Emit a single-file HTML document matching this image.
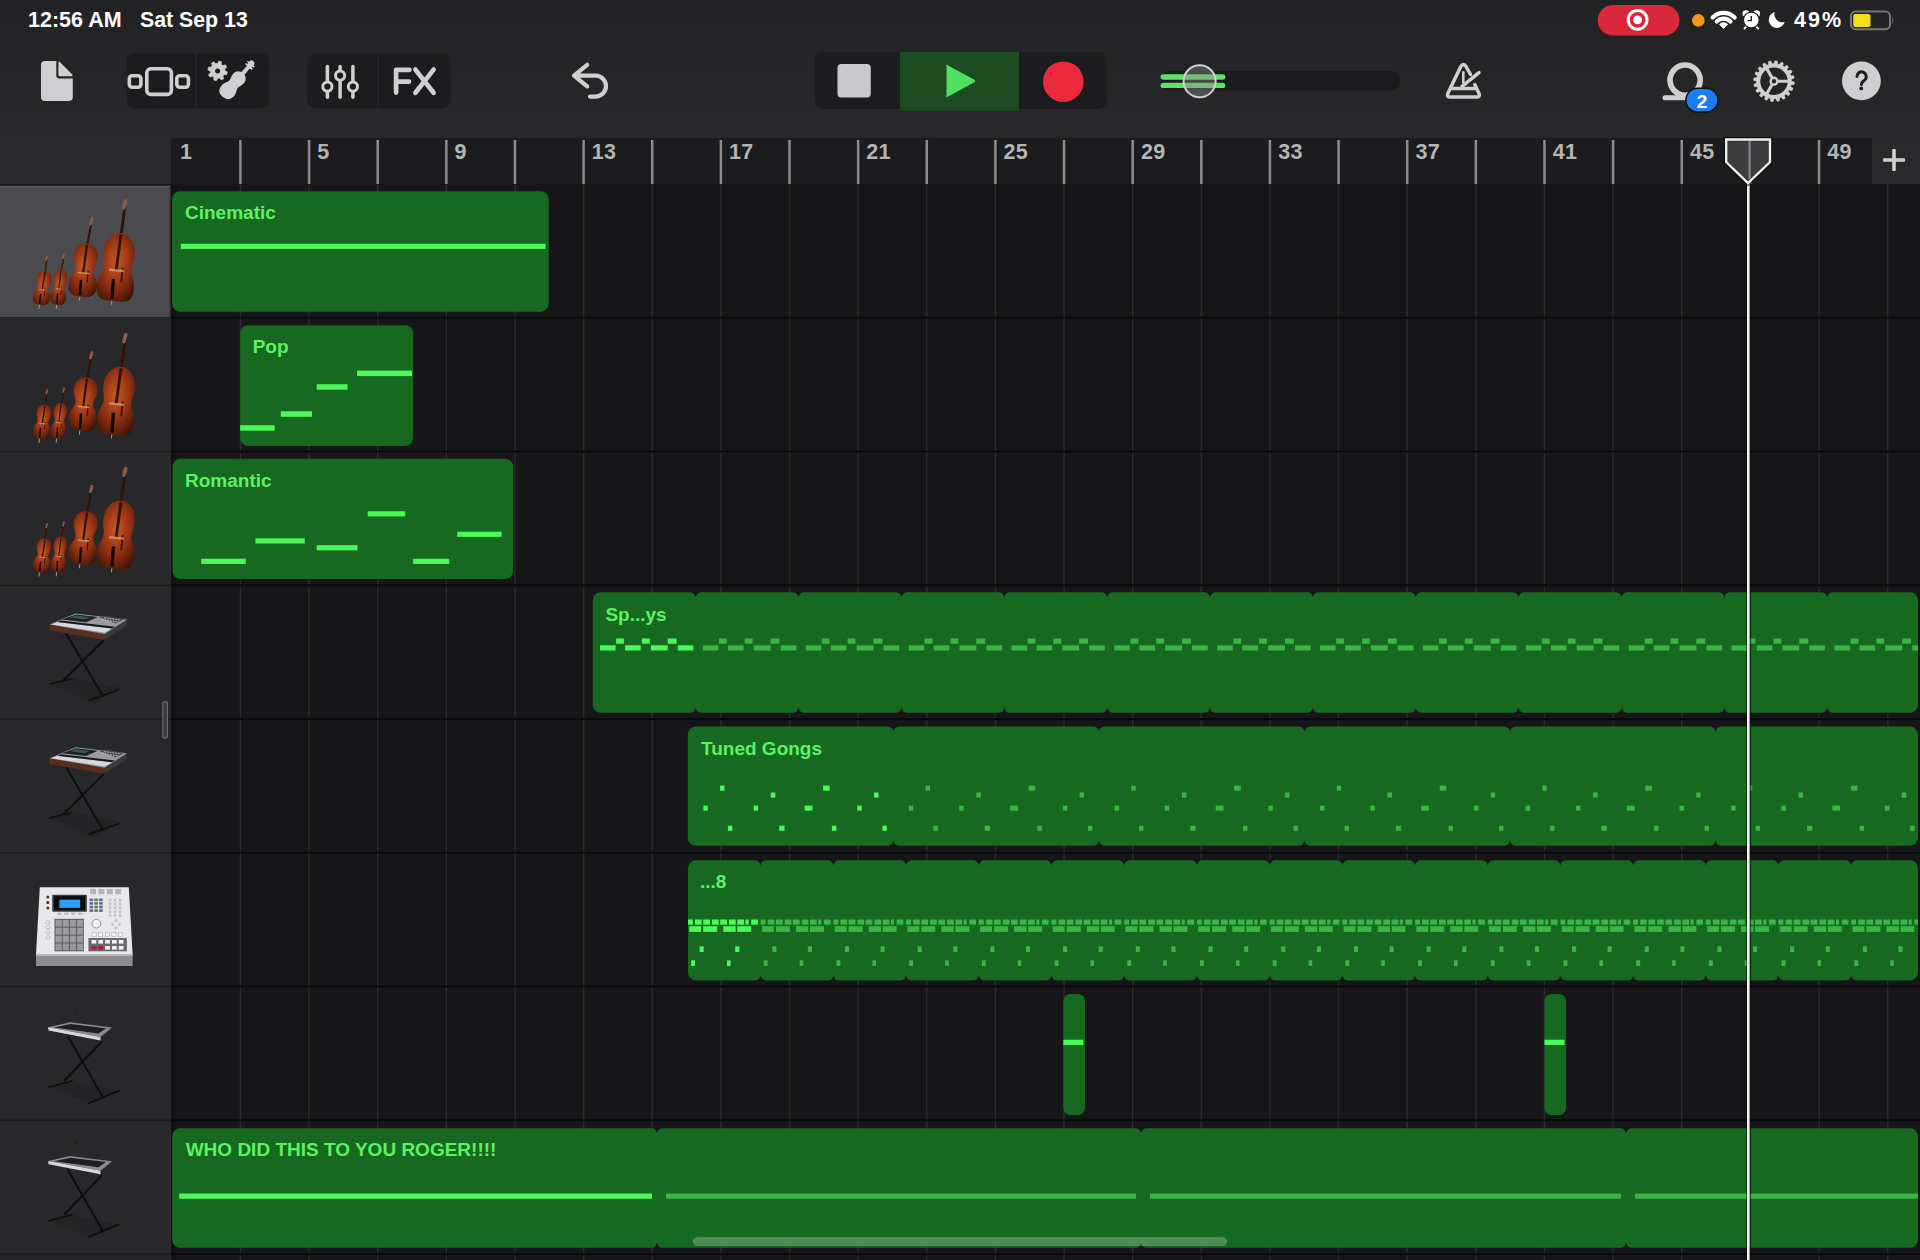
<!DOCTYPE html><html><head><meta charset="utf-8"><style>html,body{margin:0;padding:0;width:1920px;height:1260px;overflow:hidden;background:#242426;font-family:"Liberation Sans",sans-serif}</style></head><body><svg width="1920" height="1260" viewBox="0 0 1920 1260" style="position:absolute;left:0;top:0"><defs>
<radialGradient id="wood" cx="0.45" cy="0.42" r="0.72"><stop offset="0" stop-color="#c85a28"/><stop offset="0.45" stop-color="#9a3614"/><stop offset="0.8" stop-color="#5e1e0a"/><stop offset="1" stop-color="#361004"/></radialGradient>
<linearGradient id="tbg" x1="0" y1="0" x2="0" y2="1"><stop offset="0" stop-color="#222224"/><stop offset="1" stop-color="#28282a"/></linearGradient>
<linearGradient id="silver" x1="0" y1="0" x2="0" y2="1"><stop offset="0" stop-color="#f4f4f6"/><stop offset="1" stop-color="#b8b8bc"/></linearGradient>
</defs><rect x="0" y="0" width="1920" height="138" fill="url(#tbg)"/><rect x="171" y="138" width="1701" height="46" fill="#1c1c1e"/><rect x="1872" y="138" width="48" height="46" fill="#29292b"/><rect x="171" y="184" width="1749" height="1076" fill="#161618"/><rect x="0" y="137" width="171" height="48" fill="#29292b"/><rect x="0" y="185.00" width="171" height="133.75" fill="#4b4b4f"/><rect x="0" y="318.75" width="171" height="133.75" fill="#28282b"/><rect x="0" y="452.50" width="171" height="133.75" fill="#28282b"/><rect x="0" y="586.25" width="171" height="133.75" fill="#28282b"/><rect x="0" y="720.00" width="171" height="133.75" fill="#28282b"/><rect x="0" y="853.75" width="171" height="133.75" fill="#28282b"/><rect x="0" y="987.50" width="171" height="133.75" fill="#28282b"/><rect x="0" y="1121.25" width="171" height="133.75" fill="#28282b"/><rect x="0" y="184.2" width="171" height="1.6" fill="#111113"/><rect x="0" y="185.8" width="171" height="1.6" fill="#58585c"/><rect x="239.68" y="184" width="1.5" height="1076" fill="#2b2b2d"/><rect x="308.32" y="184" width="1.5" height="1076" fill="#2b2b2d"/><rect x="376.95" y="184" width="1.5" height="1076" fill="#2b2b2d"/><rect x="445.59" y="184" width="1.5" height="1076" fill="#2b2b2d"/><rect x="514.22" y="184" width="1.5" height="1076" fill="#2b2b2d"/><rect x="582.85" y="184" width="1.5" height="1076" fill="#2b2b2d"/><rect x="651.49" y="184" width="1.5" height="1076" fill="#2b2b2d"/><rect x="720.12" y="184" width="1.5" height="1076" fill="#2b2b2d"/><rect x="788.76" y="184" width="1.5" height="1076" fill="#2b2b2d"/><rect x="857.39" y="184" width="1.5" height="1076" fill="#2b2b2d"/><rect x="926.02" y="184" width="1.5" height="1076" fill="#2b2b2d"/><rect x="994.66" y="184" width="1.5" height="1076" fill="#2b2b2d"/><rect x="1063.29" y="184" width="1.5" height="1076" fill="#2b2b2d"/><rect x="1131.93" y="184" width="1.5" height="1076" fill="#2b2b2d"/><rect x="1200.56" y="184" width="1.5" height="1076" fill="#2b2b2d"/><rect x="1269.19" y="184" width="1.5" height="1076" fill="#2b2b2d"/><rect x="1337.83" y="184" width="1.5" height="1076" fill="#2b2b2d"/><rect x="1406.46" y="184" width="1.5" height="1076" fill="#2b2b2d"/><rect x="1475.10" y="184" width="1.5" height="1076" fill="#2b2b2d"/><rect x="1543.73" y="184" width="1.5" height="1076" fill="#2b2b2d"/><rect x="1612.36" y="184" width="1.5" height="1076" fill="#2b2b2d"/><rect x="1681.00" y="184" width="1.5" height="1076" fill="#2b2b2d"/><rect x="1749.63" y="184" width="1.5" height="1076" fill="#2b2b2d"/><rect x="1818.27" y="184" width="1.5" height="1076" fill="#2b2b2d"/><rect x="1886.90" y="184" width="1.5" height="1076" fill="#2b2b2d"/><rect x="171" y="184" width="4.5" height="1076" fill="#111113"/><rect x="169.6" y="185" width="1.4" height="1075" fill="#2e2d32"/><rect x="0" y="317.15" width="171" height="1.4" fill="#1b1b1e"/><rect x="171" y="316.75" width="1749" height="2" fill="#09090b"/><rect x="0" y="450.90" width="171" height="1.4" fill="#1b1b1e"/><rect x="171" y="450.50" width="1749" height="2" fill="#09090b"/><rect x="0" y="584.65" width="171" height="1.4" fill="#1b1b1e"/><rect x="171" y="584.25" width="1749" height="2" fill="#09090b"/><rect x="0" y="718.40" width="171" height="1.4" fill="#1b1b1e"/><rect x="171" y="718.00" width="1749" height="2" fill="#09090b"/><rect x="0" y="852.15" width="171" height="1.4" fill="#1b1b1e"/><rect x="171" y="851.75" width="1749" height="2" fill="#09090b"/><rect x="0" y="985.90" width="171" height="1.4" fill="#1b1b1e"/><rect x="171" y="985.50" width="1749" height="2" fill="#09090b"/><rect x="0" y="1119.65" width="171" height="1.4" fill="#1b1b1e"/><rect x="171" y="1119.25" width="1749" height="2" fill="#09090b"/><rect x="0" y="1253.40" width="171" height="1.4" fill="#1b1b1e"/><rect x="171" y="1253.00" width="1749" height="2" fill="#09090b"/><rect x="239.18" y="140" width="2.5" height="44" fill="#8c8c8e"/><rect x="307.82" y="140" width="2.5" height="44" fill="#8c8c8e"/><rect x="376.45" y="140" width="2.5" height="44" fill="#8c8c8e"/><rect x="445.09" y="140" width="2.5" height="44" fill="#8c8c8e"/><rect x="513.72" y="140" width="2.5" height="44" fill="#8c8c8e"/><rect x="582.35" y="140" width="2.5" height="44" fill="#8c8c8e"/><rect x="650.99" y="140" width="2.5" height="44" fill="#8c8c8e"/><rect x="719.62" y="140" width="2.5" height="44" fill="#8c8c8e"/><rect x="788.26" y="140" width="2.5" height="44" fill="#8c8c8e"/><rect x="856.89" y="140" width="2.5" height="44" fill="#8c8c8e"/><rect x="925.52" y="140" width="2.5" height="44" fill="#8c8c8e"/><rect x="994.16" y="140" width="2.5" height="44" fill="#8c8c8e"/><rect x="1062.79" y="140" width="2.5" height="44" fill="#8c8c8e"/><rect x="1131.43" y="140" width="2.5" height="44" fill="#8c8c8e"/><rect x="1200.06" y="140" width="2.5" height="44" fill="#8c8c8e"/><rect x="1268.69" y="140" width="2.5" height="44" fill="#8c8c8e"/><rect x="1337.33" y="140" width="2.5" height="44" fill="#8c8c8e"/><rect x="1405.96" y="140" width="2.5" height="44" fill="#8c8c8e"/><rect x="1474.60" y="140" width="2.5" height="44" fill="#8c8c8e"/><rect x="1543.23" y="140" width="2.5" height="44" fill="#8c8c8e"/><rect x="1611.86" y="140" width="2.5" height="44" fill="#8c8c8e"/><rect x="1680.50" y="140" width="2.5" height="44" fill="#8c8c8e"/><rect x="1749.13" y="140" width="2.5" height="44" fill="#8c8c8e"/><rect x="1817.77" y="140" width="2.5" height="44" fill="#8c8c8e"/><text x="180.00" y="159" font-family="Liberation Sans" font-weight="bold" font-size="21.5" letter-spacing="0.3" fill="#b4b4b6">1</text><text x="317.27" y="159" font-family="Liberation Sans" font-weight="bold" font-size="21.5" letter-spacing="0.3" fill="#b4b4b6">5</text><text x="454.54" y="159" font-family="Liberation Sans" font-weight="bold" font-size="21.5" letter-spacing="0.3" fill="#b4b4b6">9</text><text x="591.80" y="159" font-family="Liberation Sans" font-weight="bold" font-size="21.5" letter-spacing="0.3" fill="#b4b4b6">13</text><text x="729.07" y="159" font-family="Liberation Sans" font-weight="bold" font-size="21.5" letter-spacing="0.3" fill="#b4b4b6">17</text><text x="866.34" y="159" font-family="Liberation Sans" font-weight="bold" font-size="21.5" letter-spacing="0.3" fill="#b4b4b6">21</text><text x="1003.61" y="159" font-family="Liberation Sans" font-weight="bold" font-size="21.5" letter-spacing="0.3" fill="#b4b4b6">25</text><text x="1140.88" y="159" font-family="Liberation Sans" font-weight="bold" font-size="21.5" letter-spacing="0.3" fill="#b4b4b6">29</text><text x="1278.14" y="159" font-family="Liberation Sans" font-weight="bold" font-size="21.5" letter-spacing="0.3" fill="#b4b4b6">33</text><text x="1415.41" y="159" font-family="Liberation Sans" font-weight="bold" font-size="21.5" letter-spacing="0.3" fill="#b4b4b6">37</text><text x="1552.68" y="159" font-family="Liberation Sans" font-weight="bold" font-size="21.5" letter-spacing="0.3" fill="#b4b4b6">41</text><text x="1689.95" y="159" font-family="Liberation Sans" font-weight="bold" font-size="21.5" letter-spacing="0.3" fill="#b4b4b6">45</text><text x="1827.22" y="159" font-family="Liberation Sans" font-weight="bold" font-size="21.5" letter-spacing="0.3" fill="#b4b4b6">49</text><rect x="1883" y="158.2" width="22" height="3.6" rx="1" fill="#cfcfd1"/><rect x="1892.2" y="149" width="3.6" height="22" rx="1" fill="#cfcfd1"/><rect x="172.00" y="191.25" width="376.75" height="120.45" rx="8" fill="#176820"/><rect x="180.80" y="243.75" width="364.80" height="5.20" fill="#4cf95a"/><text x="185" y="219.4" font-family="Liberation Sans" font-weight="bold" font-size="19" fill="#5cf263">Cinematic</text><rect x="240.20" y="325.20" width="172.90" height="120.80" rx="8" fill="#176820"/><rect x="240.20" y="425.20" width="34.40" height="5.50" fill="#4cf95a"/><rect x="280.80" y="411.30" width="31.20" height="5.50" fill="#4cf95a"/><rect x="316.70" y="384.20" width="30.80" height="5.50" fill="#4cf95a"/><rect x="357.00" y="370.60" width="55.00" height="5.50" fill="#4cf95a"/><text x="252.7" y="353.3" font-family="Liberation Sans" font-weight="bold" font-size="19" fill="#5cf263">Pop</text><rect x="172.50" y="458.75" width="340.60" height="120.25" rx="8" fill="#176820"/><rect x="201.25" y="558.75" width="44.55" height="5.20" fill="#4cf95a"/><rect x="255.40" y="538.30" width="49.40" height="5.20" fill="#4cf95a"/><rect x="316.70" y="545.20" width="40.80" height="5.20" fill="#4cf95a"/><rect x="367.70" y="511.25" width="37.50" height="5.20" fill="#4cf95a"/><rect x="413.10" y="558.75" width="36.10" height="5.20" fill="#4cf95a"/><rect x="457.30" y="531.70" width="44.40" height="5.20" fill="#4cf95a"/><text x="185" y="486.7" font-family="Liberation Sans" font-weight="bold" font-size="19" fill="#5cf263">Romantic</text><rect x="592.80" y="592.20" width="1325.20" height="120.60" rx="8" fill="#176820"/><path d="M689.17,591.70 Q694.47,592.20 695.67,597.20 Q696.87,592.20 702.17,591.70 Z" fill="#161618"/><path d="M689.17,713.30 Q694.47,712.80 695.67,707.80 Q696.87,712.80 702.17,713.30 Z" fill="#161618"/><path d="M792.04,591.70 Q797.34,592.20 798.54,597.20 Q799.74,592.20 805.04,591.70 Z" fill="#161618"/><path d="M792.04,713.30 Q797.34,712.80 798.54,707.80 Q799.74,712.80 805.04,713.30 Z" fill="#161618"/><path d="M894.91,591.70 Q900.21,592.20 901.41,597.20 Q902.61,592.20 907.91,591.70 Z" fill="#161618"/><path d="M894.91,713.30 Q900.21,712.80 901.41,707.80 Q902.61,712.80 907.91,713.30 Z" fill="#161618"/><path d="M997.78,591.70 Q1003.08,592.20 1004.28,597.20 Q1005.48,592.20 1010.78,591.70 Z" fill="#161618"/><path d="M997.78,713.30 Q1003.08,712.80 1004.28,707.80 Q1005.48,712.80 1010.78,713.30 Z" fill="#161618"/><path d="M1100.65,591.70 Q1105.95,592.20 1107.15,597.20 Q1108.35,592.20 1113.65,591.70 Z" fill="#161618"/><path d="M1100.65,713.30 Q1105.95,712.80 1107.15,707.80 Q1108.35,712.80 1113.65,713.30 Z" fill="#161618"/><path d="M1203.52,591.70 Q1208.82,592.20 1210.02,597.20 Q1211.22,592.20 1216.52,591.70 Z" fill="#161618"/><path d="M1203.52,713.30 Q1208.82,712.80 1210.02,707.80 Q1211.22,712.80 1216.52,713.30 Z" fill="#161618"/><path d="M1306.39,591.70 Q1311.69,592.20 1312.89,597.20 Q1314.09,592.20 1319.39,591.70 Z" fill="#161618"/><path d="M1306.39,713.30 Q1311.69,712.80 1312.89,707.80 Q1314.09,712.80 1319.39,713.30 Z" fill="#161618"/><path d="M1409.26,591.70 Q1414.56,592.20 1415.76,597.20 Q1416.96,592.20 1422.26,591.70 Z" fill="#161618"/><path d="M1409.26,713.30 Q1414.56,712.80 1415.76,707.80 Q1416.96,712.80 1422.26,713.30 Z" fill="#161618"/><path d="M1512.13,591.70 Q1517.43,592.20 1518.63,597.20 Q1519.83,592.20 1525.13,591.70 Z" fill="#161618"/><path d="M1512.13,713.30 Q1517.43,712.80 1518.63,707.80 Q1519.83,712.80 1525.13,713.30 Z" fill="#161618"/><path d="M1615.00,591.70 Q1620.30,592.20 1621.50,597.20 Q1622.70,592.20 1628.00,591.70 Z" fill="#161618"/><path d="M1615.00,713.30 Q1620.30,712.80 1621.50,707.80 Q1622.70,712.80 1628.00,713.30 Z" fill="#161618"/><path d="M1717.87,591.70 Q1723.17,592.20 1724.37,597.20 Q1725.57,592.20 1730.87,591.70 Z" fill="#161618"/><path d="M1717.87,713.30 Q1723.17,712.80 1724.37,707.80 Q1725.57,712.80 1730.87,713.30 Z" fill="#161618"/><path d="M1820.74,591.70 Q1826.04,592.20 1827.24,597.20 Q1828.44,592.20 1833.74,591.70 Z" fill="#161618"/><path d="M1820.74,713.30 Q1826.04,712.80 1827.24,707.80 Q1828.44,712.80 1833.74,713.30 Z" fill="#161618"/><rect x="600.00" y="645.30" width="15.50" height="5.20" fill="#4cf95a"/><rect x="625.10" y="645.30" width="15.60" height="5.20" fill="#4cf95a"/><rect x="650.90" y="645.30" width="16.80" height="5.20" fill="#4cf95a"/><rect x="677.80" y="645.30" width="15.60" height="5.20" fill="#4cf95a"/><rect x="616.10" y="638.50" width="7.80" height="5.20" fill="#4cf95a"/><rect x="641.90" y="638.50" width="7.80" height="5.20" fill="#4cf95a"/><rect x="667.70" y="638.50" width="8.90" height="5.20" fill="#4cf95a"/><rect x="702.87" y="645.30" width="15.50" height="5.20" fill="#3bb546"/><rect x="727.97" y="645.30" width="15.60" height="5.20" fill="#3bb546"/><rect x="753.77" y="645.30" width="16.80" height="5.20" fill="#3bb546"/><rect x="780.67" y="645.30" width="15.60" height="5.20" fill="#3bb546"/><rect x="718.97" y="638.50" width="7.80" height="5.20" fill="#3bb546"/><rect x="744.77" y="638.50" width="7.80" height="5.20" fill="#3bb546"/><rect x="770.57" y="638.50" width="8.90" height="5.20" fill="#3bb546"/><rect x="805.74" y="645.30" width="15.50" height="5.20" fill="#3bb546"/><rect x="830.84" y="645.30" width="15.60" height="5.20" fill="#3bb546"/><rect x="856.64" y="645.30" width="16.80" height="5.20" fill="#3bb546"/><rect x="883.54" y="645.30" width="15.60" height="5.20" fill="#3bb546"/><rect x="821.84" y="638.50" width="7.80" height="5.20" fill="#3bb546"/><rect x="847.64" y="638.50" width="7.80" height="5.20" fill="#3bb546"/><rect x="873.44" y="638.50" width="8.90" height="5.20" fill="#3bb546"/><rect x="908.61" y="645.30" width="15.50" height="5.20" fill="#3bb546"/><rect x="933.71" y="645.30" width="15.60" height="5.20" fill="#3bb546"/><rect x="959.51" y="645.30" width="16.80" height="5.20" fill="#3bb546"/><rect x="986.41" y="645.30" width="15.60" height="5.20" fill="#3bb546"/><rect x="924.71" y="638.50" width="7.80" height="5.20" fill="#3bb546"/><rect x="950.51" y="638.50" width="7.80" height="5.20" fill="#3bb546"/><rect x="976.31" y="638.50" width="8.90" height="5.20" fill="#3bb546"/><rect x="1011.48" y="645.30" width="15.50" height="5.20" fill="#3bb546"/><rect x="1036.58" y="645.30" width="15.60" height="5.20" fill="#3bb546"/><rect x="1062.38" y="645.30" width="16.80" height="5.20" fill="#3bb546"/><rect x="1089.28" y="645.30" width="15.60" height="5.20" fill="#3bb546"/><rect x="1027.58" y="638.50" width="7.80" height="5.20" fill="#3bb546"/><rect x="1053.38" y="638.50" width="7.80" height="5.20" fill="#3bb546"/><rect x="1079.18" y="638.50" width="8.90" height="5.20" fill="#3bb546"/><rect x="1114.35" y="645.30" width="15.50" height="5.20" fill="#3bb546"/><rect x="1139.45" y="645.30" width="15.60" height="5.20" fill="#3bb546"/><rect x="1165.25" y="645.30" width="16.80" height="5.20" fill="#3bb546"/><rect x="1192.15" y="645.30" width="15.60" height="5.20" fill="#3bb546"/><rect x="1130.45" y="638.50" width="7.80" height="5.20" fill="#3bb546"/><rect x="1156.25" y="638.50" width="7.80" height="5.20" fill="#3bb546"/><rect x="1182.05" y="638.50" width="8.90" height="5.20" fill="#3bb546"/><rect x="1217.22" y="645.30" width="15.50" height="5.20" fill="#3bb546"/><rect x="1242.32" y="645.30" width="15.60" height="5.20" fill="#3bb546"/><rect x="1268.12" y="645.30" width="16.80" height="5.20" fill="#3bb546"/><rect x="1295.02" y="645.30" width="15.60" height="5.20" fill="#3bb546"/><rect x="1233.32" y="638.50" width="7.80" height="5.20" fill="#3bb546"/><rect x="1259.12" y="638.50" width="7.80" height="5.20" fill="#3bb546"/><rect x="1284.92" y="638.50" width="8.90" height="5.20" fill="#3bb546"/><rect x="1320.09" y="645.30" width="15.50" height="5.20" fill="#3bb546"/><rect x="1345.19" y="645.30" width="15.60" height="5.20" fill="#3bb546"/><rect x="1370.99" y="645.30" width="16.80" height="5.20" fill="#3bb546"/><rect x="1397.89" y="645.30" width="15.60" height="5.20" fill="#3bb546"/><rect x="1336.19" y="638.50" width="7.80" height="5.20" fill="#3bb546"/><rect x="1361.99" y="638.50" width="7.80" height="5.20" fill="#3bb546"/><rect x="1387.79" y="638.50" width="8.90" height="5.20" fill="#3bb546"/><rect x="1422.96" y="645.30" width="15.50" height="5.20" fill="#3bb546"/><rect x="1448.06" y="645.30" width="15.60" height="5.20" fill="#3bb546"/><rect x="1473.86" y="645.30" width="16.80" height="5.20" fill="#3bb546"/><rect x="1500.76" y="645.30" width="15.60" height="5.20" fill="#3bb546"/><rect x="1439.06" y="638.50" width="7.80" height="5.20" fill="#3bb546"/><rect x="1464.86" y="638.50" width="7.80" height="5.20" fill="#3bb546"/><rect x="1490.66" y="638.50" width="8.90" height="5.20" fill="#3bb546"/><rect x="1525.83" y="645.30" width="15.50" height="5.20" fill="#3bb546"/><rect x="1550.93" y="645.30" width="15.60" height="5.20" fill="#3bb546"/><rect x="1576.73" y="645.30" width="16.80" height="5.20" fill="#3bb546"/><rect x="1603.63" y="645.30" width="15.60" height="5.20" fill="#3bb546"/><rect x="1541.93" y="638.50" width="7.80" height="5.20" fill="#3bb546"/><rect x="1567.73" y="638.50" width="7.80" height="5.20" fill="#3bb546"/><rect x="1593.53" y="638.50" width="8.90" height="5.20" fill="#3bb546"/><rect x="1628.70" y="645.30" width="15.50" height="5.20" fill="#3bb546"/><rect x="1653.80" y="645.30" width="15.60" height="5.20" fill="#3bb546"/><rect x="1679.60" y="645.30" width="16.80" height="5.20" fill="#3bb546"/><rect x="1706.50" y="645.30" width="15.60" height="5.20" fill="#3bb546"/><rect x="1644.80" y="638.50" width="7.80" height="5.20" fill="#3bb546"/><rect x="1670.60" y="638.50" width="7.80" height="5.20" fill="#3bb546"/><rect x="1696.40" y="638.50" width="8.90" height="5.20" fill="#3bb546"/><rect x="1731.57" y="645.30" width="15.50" height="5.20" fill="#3bb546"/><rect x="1756.67" y="645.30" width="15.60" height="5.20" fill="#3bb546"/><rect x="1782.47" y="645.30" width="16.80" height="5.20" fill="#3bb546"/><rect x="1809.37" y="645.30" width="15.60" height="5.20" fill="#3bb546"/><rect x="1747.67" y="638.50" width="7.80" height="5.20" fill="#3bb546"/><rect x="1773.47" y="638.50" width="7.80" height="5.20" fill="#3bb546"/><rect x="1799.27" y="638.50" width="8.90" height="5.20" fill="#3bb546"/><rect x="1834.44" y="645.30" width="15.50" height="5.20" fill="#3bb546"/><rect x="1859.54" y="645.30" width="15.60" height="5.20" fill="#3bb546"/><rect x="1885.34" y="645.30" width="16.80" height="5.20" fill="#3bb546"/><rect x="1912.24" y="645.30" width="5.76" height="5.20" fill="#3bb546"/><rect x="1850.54" y="638.50" width="7.80" height="5.20" fill="#3bb546"/><rect x="1876.34" y="638.50" width="7.80" height="5.20" fill="#3bb546"/><rect x="1902.14" y="638.50" width="8.90" height="5.20" fill="#3bb546"/><text x="605.4" y="621.1" font-family="Liberation Sans" font-weight="bold" font-size="19" fill="#5cf263">Sp...ys</text><rect x="687.80" y="726.60" width="1230.20" height="119.20" rx="8" fill="#176820"/><path d="M886.85,726.10 Q892.15,726.60 893.35,731.60 Q894.55,726.60 899.85,726.10 Z" fill="#161618"/><path d="M886.85,846.30 Q892.15,845.80 893.35,840.80 Q894.55,845.80 899.85,846.30 Z" fill="#161618"/><path d="M1092.40,726.10 Q1097.70,726.60 1098.90,731.60 Q1100.10,726.60 1105.40,726.10 Z" fill="#161618"/><path d="M1092.40,846.30 Q1097.70,845.80 1098.90,840.80 Q1100.10,845.80 1105.40,846.30 Z" fill="#161618"/><path d="M1297.95,726.10 Q1303.25,726.60 1304.45,731.60 Q1305.65,726.60 1310.95,726.10 Z" fill="#161618"/><path d="M1297.95,846.30 Q1303.25,845.80 1304.45,840.80 Q1305.65,845.80 1310.95,846.30 Z" fill="#161618"/><path d="M1503.50,726.10 Q1508.80,726.60 1510.00,731.60 Q1511.20,726.60 1516.50,726.10 Z" fill="#161618"/><path d="M1503.50,846.30 Q1508.80,845.80 1510.00,840.80 Q1511.20,845.80 1516.50,846.30 Z" fill="#161618"/><path d="M1709.05,726.10 Q1714.35,726.60 1715.55,731.60 Q1716.75,726.60 1722.05,726.10 Z" fill="#161618"/><path d="M1709.05,846.30 Q1714.35,845.80 1715.55,840.80 Q1716.75,845.80 1722.05,846.30 Z" fill="#161618"/><rect x="720.10" y="785.60" width="4.40" height="5.10" fill="#4cf95a"/><rect x="823.10" y="785.60" width="6.60" height="5.10" fill="#4cf95a"/><rect x="770.80" y="792.50" width="4.50" height="5.10" fill="#4cf95a"/><rect x="874.00" y="792.50" width="4.50" height="5.10" fill="#4cf95a"/><rect x="703.40" y="805.60" width="4.40" height="5.10" fill="#4cf95a"/><rect x="753.70" y="805.60" width="4.40" height="5.10" fill="#4cf95a"/><rect x="804.60" y="805.60" width="7.80" height="5.10" fill="#4cf95a"/><rect x="857.30" y="805.60" width="4.40" height="5.10" fill="#4cf95a"/><rect x="727.90" y="825.70" width="4.40" height="5.10" fill="#4cf95a"/><rect x="779.20" y="825.70" width="5.40" height="5.10" fill="#4cf95a"/><rect x="831.90" y="825.70" width="4.40" height="5.10" fill="#4cf95a"/><rect x="882.40" y="825.70" width="4.40" height="5.10" fill="#4cf95a"/><rect x="925.65" y="785.60" width="4.40" height="5.10" fill="#3bb546"/><rect x="1028.65" y="785.60" width="6.60" height="5.10" fill="#3bb546"/><rect x="976.35" y="792.50" width="4.50" height="5.10" fill="#3bb546"/><rect x="1079.55" y="792.50" width="4.50" height="5.10" fill="#3bb546"/><rect x="908.95" y="805.60" width="4.40" height="5.10" fill="#3bb546"/><rect x="959.25" y="805.60" width="4.40" height="5.10" fill="#3bb546"/><rect x="1010.15" y="805.60" width="7.80" height="5.10" fill="#3bb546"/><rect x="1062.85" y="805.60" width="4.40" height="5.10" fill="#3bb546"/><rect x="933.45" y="825.70" width="4.40" height="5.10" fill="#3bb546"/><rect x="984.75" y="825.70" width="5.40" height="5.10" fill="#3bb546"/><rect x="1037.45" y="825.70" width="4.40" height="5.10" fill="#3bb546"/><rect x="1087.95" y="825.70" width="4.40" height="5.10" fill="#3bb546"/><rect x="1131.20" y="785.60" width="4.40" height="5.10" fill="#3bb546"/><rect x="1234.20" y="785.60" width="6.60" height="5.10" fill="#3bb546"/><rect x="1181.90" y="792.50" width="4.50" height="5.10" fill="#3bb546"/><rect x="1285.10" y="792.50" width="4.50" height="5.10" fill="#3bb546"/><rect x="1114.50" y="805.60" width="4.40" height="5.10" fill="#3bb546"/><rect x="1164.80" y="805.60" width="4.40" height="5.10" fill="#3bb546"/><rect x="1215.70" y="805.60" width="7.80" height="5.10" fill="#3bb546"/><rect x="1268.40" y="805.60" width="4.40" height="5.10" fill="#3bb546"/><rect x="1139.00" y="825.70" width="4.40" height="5.10" fill="#3bb546"/><rect x="1190.30" y="825.70" width="5.40" height="5.10" fill="#3bb546"/><rect x="1243.00" y="825.70" width="4.40" height="5.10" fill="#3bb546"/><rect x="1293.50" y="825.70" width="4.40" height="5.10" fill="#3bb546"/><rect x="1336.75" y="785.60" width="4.40" height="5.10" fill="#3bb546"/><rect x="1439.75" y="785.60" width="6.60" height="5.10" fill="#3bb546"/><rect x="1387.45" y="792.50" width="4.50" height="5.10" fill="#3bb546"/><rect x="1490.65" y="792.50" width="4.50" height="5.10" fill="#3bb546"/><rect x="1320.05" y="805.60" width="4.40" height="5.10" fill="#3bb546"/><rect x="1370.35" y="805.60" width="4.40" height="5.10" fill="#3bb546"/><rect x="1421.25" y="805.60" width="7.80" height="5.10" fill="#3bb546"/><rect x="1473.95" y="805.60" width="4.40" height="5.10" fill="#3bb546"/><rect x="1344.55" y="825.70" width="4.40" height="5.10" fill="#3bb546"/><rect x="1395.85" y="825.70" width="5.40" height="5.10" fill="#3bb546"/><rect x="1448.55" y="825.70" width="4.40" height="5.10" fill="#3bb546"/><rect x="1499.05" y="825.70" width="4.40" height="5.10" fill="#3bb546"/><rect x="1542.30" y="785.60" width="4.40" height="5.10" fill="#3bb546"/><rect x="1645.30" y="785.60" width="6.60" height="5.10" fill="#3bb546"/><rect x="1593.00" y="792.50" width="4.50" height="5.10" fill="#3bb546"/><rect x="1696.20" y="792.50" width="4.50" height="5.10" fill="#3bb546"/><rect x="1525.60" y="805.60" width="4.40" height="5.10" fill="#3bb546"/><rect x="1575.90" y="805.60" width="4.40" height="5.10" fill="#3bb546"/><rect x="1626.80" y="805.60" width="7.80" height="5.10" fill="#3bb546"/><rect x="1679.50" y="805.60" width="4.40" height="5.10" fill="#3bb546"/><rect x="1550.10" y="825.70" width="4.40" height="5.10" fill="#3bb546"/><rect x="1601.40" y="825.70" width="5.40" height="5.10" fill="#3bb546"/><rect x="1654.10" y="825.70" width="4.40" height="5.10" fill="#3bb546"/><rect x="1704.60" y="825.70" width="4.40" height="5.10" fill="#3bb546"/><rect x="1747.85" y="785.60" width="4.40" height="5.10" fill="#3bb546"/><rect x="1850.85" y="785.60" width="6.60" height="5.10" fill="#3bb546"/><rect x="1798.55" y="792.50" width="4.50" height="5.10" fill="#3bb546"/><rect x="1901.75" y="792.50" width="4.50" height="5.10" fill="#3bb546"/><rect x="1731.15" y="805.60" width="4.40" height="5.10" fill="#3bb546"/><rect x="1781.45" y="805.60" width="4.40" height="5.10" fill="#3bb546"/><rect x="1832.35" y="805.60" width="7.80" height="5.10" fill="#3bb546"/><rect x="1885.05" y="805.60" width="4.40" height="5.10" fill="#3bb546"/><rect x="1755.65" y="825.70" width="4.40" height="5.10" fill="#3bb546"/><rect x="1806.95" y="825.70" width="5.40" height="5.10" fill="#3bb546"/><rect x="1859.65" y="825.70" width="4.40" height="5.10" fill="#3bb546"/><rect x="1910.15" y="825.70" width="4.40" height="5.10" fill="#3bb546"/><text x="701" y="754.7" font-family="Liberation Sans" font-weight="bold" font-size="19" fill="#5cf263">Tuned Gongs</text><rect x="688.00" y="860.20" width="1230.00" height="120.20" rx="8" fill="#176820"/><path d="M754.20,859.70 Q759.50,860.20 760.70,865.20 Q761.90,860.20 767.20,859.70 Z" fill="#161618"/><path d="M754.20,980.90 Q759.50,980.40 760.70,975.40 Q761.90,980.40 767.20,980.90 Z" fill="#161618"/><path d="M826.90,859.70 Q832.20,860.20 833.40,865.20 Q834.60,860.20 839.90,859.70 Z" fill="#161618"/><path d="M826.90,980.90 Q832.20,980.40 833.40,975.40 Q834.60,980.40 839.90,980.90 Z" fill="#161618"/><path d="M899.60,859.70 Q904.90,860.20 906.10,865.20 Q907.30,860.20 912.60,859.70 Z" fill="#161618"/><path d="M899.60,980.90 Q904.90,980.40 906.10,975.40 Q907.30,980.40 912.60,980.90 Z" fill="#161618"/><path d="M972.30,859.70 Q977.60,860.20 978.80,865.20 Q980.00,860.20 985.30,859.70 Z" fill="#161618"/><path d="M972.30,980.90 Q977.60,980.40 978.80,975.40 Q980.00,980.40 985.30,980.90 Z" fill="#161618"/><path d="M1045.00,859.70 Q1050.30,860.20 1051.50,865.20 Q1052.70,860.20 1058.00,859.70 Z" fill="#161618"/><path d="M1045.00,980.90 Q1050.30,980.40 1051.50,975.40 Q1052.70,980.40 1058.00,980.90 Z" fill="#161618"/><path d="M1117.70,859.70 Q1123.00,860.20 1124.20,865.20 Q1125.40,860.20 1130.70,859.70 Z" fill="#161618"/><path d="M1117.70,980.90 Q1123.00,980.40 1124.20,975.40 Q1125.40,980.40 1130.70,980.90 Z" fill="#161618"/><path d="M1190.40,859.70 Q1195.70,860.20 1196.90,865.20 Q1198.10,860.20 1203.40,859.70 Z" fill="#161618"/><path d="M1190.40,980.90 Q1195.70,980.40 1196.90,975.40 Q1198.10,980.40 1203.40,980.90 Z" fill="#161618"/><path d="M1263.10,859.70 Q1268.40,860.20 1269.60,865.20 Q1270.80,860.20 1276.10,859.70 Z" fill="#161618"/><path d="M1263.10,980.90 Q1268.40,980.40 1269.60,975.40 Q1270.80,980.40 1276.10,980.90 Z" fill="#161618"/><path d="M1335.80,859.70 Q1341.10,860.20 1342.30,865.20 Q1343.50,860.20 1348.80,859.70 Z" fill="#161618"/><path d="M1335.80,980.90 Q1341.10,980.40 1342.30,975.40 Q1343.50,980.40 1348.80,980.90 Z" fill="#161618"/><path d="M1408.50,859.70 Q1413.80,860.20 1415.00,865.20 Q1416.20,860.20 1421.50,859.70 Z" fill="#161618"/><path d="M1408.50,980.90 Q1413.80,980.40 1415.00,975.40 Q1416.20,980.40 1421.50,980.90 Z" fill="#161618"/><path d="M1481.20,859.70 Q1486.50,860.20 1487.70,865.20 Q1488.90,860.20 1494.20,859.70 Z" fill="#161618"/><path d="M1481.20,980.90 Q1486.50,980.40 1487.70,975.40 Q1488.90,980.40 1494.20,980.90 Z" fill="#161618"/><path d="M1553.90,859.70 Q1559.20,860.20 1560.40,865.20 Q1561.60,860.20 1566.90,859.70 Z" fill="#161618"/><path d="M1553.90,980.90 Q1559.20,980.40 1560.40,975.40 Q1561.60,980.40 1566.90,980.90 Z" fill="#161618"/><path d="M1626.60,859.70 Q1631.90,860.20 1633.10,865.20 Q1634.30,860.20 1639.60,859.70 Z" fill="#161618"/><path d="M1626.60,980.90 Q1631.90,980.40 1633.10,975.40 Q1634.30,980.40 1639.60,980.90 Z" fill="#161618"/><path d="M1699.30,859.70 Q1704.60,860.20 1705.80,865.20 Q1707.00,860.20 1712.30,859.70 Z" fill="#161618"/><path d="M1699.30,980.90 Q1704.60,980.40 1705.80,975.40 Q1707.00,980.40 1712.30,980.90 Z" fill="#161618"/><path d="M1772.00,859.70 Q1777.30,860.20 1778.50,865.20 Q1779.70,860.20 1785.00,859.70 Z" fill="#161618"/><path d="M1772.00,980.90 Q1777.30,980.40 1778.50,975.40 Q1779.70,980.40 1785.00,980.90 Z" fill="#161618"/><path d="M1844.70,859.70 Q1850.00,860.20 1851.20,865.20 Q1852.40,860.20 1857.70,859.70 Z" fill="#161618"/><path d="M1844.70,980.90 Q1850.00,980.40 1851.20,975.40 Q1852.40,980.40 1857.70,980.90 Z" fill="#161618"/><rect x="688.00" y="919.50" width="4.90" height="5.20" fill="#4cf95a"/><rect x="695.00" y="919.50" width="6.70" height="5.20" fill="#4cf95a"/><rect x="703.20" y="919.50" width="6.80" height="5.20" fill="#4cf95a"/><rect x="712.00" y="919.50" width="6.70" height="5.20" fill="#4cf95a"/><rect x="720.20" y="919.50" width="6.80" height="5.20" fill="#4cf95a"/><rect x="729.00" y="919.50" width="6.70" height="5.20" fill="#4cf95a"/><rect x="737.30" y="919.50" width="6.70" height="5.20" fill="#4cf95a"/><rect x="745.50" y="919.50" width="3.10" height="5.20" fill="#4cf95a"/><rect x="751.20" y="919.50" width="6.70" height="5.20" fill="#4cf95a"/><rect x="689.30" y="926.20" width="11.90" height="5.70" fill="#4cf95a"/><rect x="703.20" y="926.20" width="14.00" height="5.70" fill="#4cf95a"/><rect x="723.30" y="926.20" width="12.40" height="5.70" fill="#4cf95a"/><rect x="737.30" y="926.20" width="13.90" height="5.70" fill="#4cf95a"/><rect x="699.60" y="946.30" width="4.10" height="5.70" fill="#4cf95a"/><rect x="735.20" y="946.30" width="4.10" height="5.70" fill="#4cf95a"/><rect x="691.10" y="960.30" width="3.90" height="5.70" fill="#4cf95a"/><rect x="727.00" y="960.30" width="3.60" height="5.70" fill="#4cf95a"/><rect x="760.70" y="919.50" width="4.90" height="5.20" fill="#3bb546"/><rect x="767.70" y="919.50" width="6.70" height="5.20" fill="#3bb546"/><rect x="775.90" y="919.50" width="6.80" height="5.20" fill="#3bb546"/><rect x="784.70" y="919.50" width="6.70" height="5.20" fill="#3bb546"/><rect x="792.90" y="919.50" width="6.80" height="5.20" fill="#3bb546"/><rect x="801.70" y="919.50" width="6.70" height="5.20" fill="#3bb546"/><rect x="810.00" y="919.50" width="6.70" height="5.20" fill="#3bb546"/><rect x="818.20" y="919.50" width="3.10" height="5.20" fill="#3bb546"/><rect x="823.90" y="919.50" width="6.70" height="5.20" fill="#3bb546"/><rect x="762.00" y="926.20" width="11.90" height="5.70" fill="#3bb546"/><rect x="775.90" y="926.20" width="14.00" height="5.70" fill="#3bb546"/><rect x="796.00" y="926.20" width="12.40" height="5.70" fill="#3bb546"/><rect x="810.00" y="926.20" width="13.90" height="5.70" fill="#3bb546"/><rect x="772.30" y="946.30" width="4.10" height="5.70" fill="#3bb546"/><rect x="807.90" y="946.30" width="4.10" height="5.70" fill="#3bb546"/><rect x="763.80" y="960.30" width="3.90" height="5.70" fill="#3bb546"/><rect x="799.70" y="960.30" width="3.60" height="5.70" fill="#3bb546"/><rect x="833.40" y="919.50" width="4.90" height="5.20" fill="#3bb546"/><rect x="840.40" y="919.50" width="6.70" height="5.20" fill="#3bb546"/><rect x="848.60" y="919.50" width="6.80" height="5.20" fill="#3bb546"/><rect x="857.40" y="919.50" width="6.70" height="5.20" fill="#3bb546"/><rect x="865.60" y="919.50" width="6.80" height="5.20" fill="#3bb546"/><rect x="874.40" y="919.50" width="6.70" height="5.20" fill="#3bb546"/><rect x="882.70" y="919.50" width="6.70" height="5.20" fill="#3bb546"/><rect x="890.90" y="919.50" width="3.10" height="5.20" fill="#3bb546"/><rect x="896.60" y="919.50" width="6.70" height="5.20" fill="#3bb546"/><rect x="834.70" y="926.20" width="11.90" height="5.70" fill="#3bb546"/><rect x="848.60" y="926.20" width="14.00" height="5.70" fill="#3bb546"/><rect x="868.70" y="926.20" width="12.40" height="5.70" fill="#3bb546"/><rect x="882.70" y="926.20" width="13.90" height="5.70" fill="#3bb546"/><rect x="845.00" y="946.30" width="4.10" height="5.70" fill="#3bb546"/><rect x="880.60" y="946.30" width="4.10" height="5.70" fill="#3bb546"/><rect x="836.50" y="960.30" width="3.90" height="5.70" fill="#3bb546"/><rect x="872.40" y="960.30" width="3.60" height="5.70" fill="#3bb546"/><rect x="906.10" y="919.50" width="4.90" height="5.20" fill="#3bb546"/><rect x="913.10" y="919.50" width="6.70" height="5.20" fill="#3bb546"/><rect x="921.30" y="919.50" width="6.80" height="5.20" fill="#3bb546"/><rect x="930.10" y="919.50" width="6.70" height="5.20" fill="#3bb546"/><rect x="938.30" y="919.50" width="6.80" height="5.20" fill="#3bb546"/><rect x="947.10" y="919.50" width="6.70" height="5.20" fill="#3bb546"/><rect x="955.40" y="919.50" width="6.70" height="5.20" fill="#3bb546"/><rect x="963.60" y="919.50" width="3.10" height="5.20" fill="#3bb546"/><rect x="969.30" y="919.50" width="6.70" height="5.20" fill="#3bb546"/><rect x="907.40" y="926.20" width="11.90" height="5.70" fill="#3bb546"/><rect x="921.30" y="926.20" width="14.00" height="5.70" fill="#3bb546"/><rect x="941.40" y="926.20" width="12.40" height="5.70" fill="#3bb546"/><rect x="955.40" y="926.20" width="13.90" height="5.70" fill="#3bb546"/><rect x="917.70" y="946.30" width="4.10" height="5.70" fill="#3bb546"/><rect x="953.30" y="946.30" width="4.10" height="5.70" fill="#3bb546"/><rect x="909.20" y="960.30" width="3.90" height="5.70" fill="#3bb546"/><rect x="945.10" y="960.30" width="3.60" height="5.70" fill="#3bb546"/><rect x="978.80" y="919.50" width="4.90" height="5.20" fill="#3bb546"/><rect x="985.80" y="919.50" width="6.70" height="5.20" fill="#3bb546"/><rect x="994.00" y="919.50" width="6.80" height="5.20" fill="#3bb546"/><rect x="1002.80" y="919.50" width="6.70" height="5.20" fill="#3bb546"/><rect x="1011.00" y="919.50" width="6.80" height="5.20" fill="#3bb546"/><rect x="1019.80" y="919.50" width="6.70" height="5.20" fill="#3bb546"/><rect x="1028.10" y="919.50" width="6.70" height="5.20" fill="#3bb546"/><rect x="1036.30" y="919.50" width="3.10" height="5.20" fill="#3bb546"/><rect x="1042.00" y="919.50" width="6.70" height="5.20" fill="#3bb546"/><rect x="980.10" y="926.20" width="11.90" height="5.70" fill="#3bb546"/><rect x="994.00" y="926.20" width="14.00" height="5.70" fill="#3bb546"/><rect x="1014.10" y="926.20" width="12.40" height="5.70" fill="#3bb546"/><rect x="1028.10" y="926.20" width="13.90" height="5.70" fill="#3bb546"/><rect x="990.40" y="946.30" width="4.10" height="5.70" fill="#3bb546"/><rect x="1026.00" y="946.30" width="4.10" height="5.70" fill="#3bb546"/><rect x="981.90" y="960.30" width="3.90" height="5.70" fill="#3bb546"/><rect x="1017.80" y="960.30" width="3.60" height="5.70" fill="#3bb546"/><rect x="1051.50" y="919.50" width="4.90" height="5.20" fill="#3bb546"/><rect x="1058.50" y="919.50" width="6.70" height="5.20" fill="#3bb546"/><rect x="1066.70" y="919.50" width="6.80" height="5.20" fill="#3bb546"/><rect x="1075.50" y="919.50" width="6.70" height="5.20" fill="#3bb546"/><rect x="1083.70" y="919.50" width="6.80" height="5.20" fill="#3bb546"/><rect x="1092.50" y="919.50" width="6.70" height="5.20" fill="#3bb546"/><rect x="1100.80" y="919.50" width="6.70" height="5.20" fill="#3bb546"/><rect x="1109.00" y="919.50" width="3.10" height="5.20" fill="#3bb546"/><rect x="1114.70" y="919.50" width="6.70" height="5.20" fill="#3bb546"/><rect x="1052.80" y="926.20" width="11.90" height="5.70" fill="#3bb546"/><rect x="1066.70" y="926.20" width="14.00" height="5.70" fill="#3bb546"/><rect x="1086.80" y="926.20" width="12.40" height="5.70" fill="#3bb546"/><rect x="1100.80" y="926.20" width="13.90" height="5.70" fill="#3bb546"/><rect x="1063.10" y="946.30" width="4.10" height="5.70" fill="#3bb546"/><rect x="1098.70" y="946.30" width="4.10" height="5.70" fill="#3bb546"/><rect x="1054.60" y="960.30" width="3.90" height="5.70" fill="#3bb546"/><rect x="1090.50" y="960.30" width="3.60" height="5.70" fill="#3bb546"/><rect x="1124.20" y="919.50" width="4.90" height="5.20" fill="#3bb546"/><rect x="1131.20" y="919.50" width="6.70" height="5.20" fill="#3bb546"/><rect x="1139.40" y="919.50" width="6.80" height="5.20" fill="#3bb546"/><rect x="1148.20" y="919.50" width="6.70" height="5.20" fill="#3bb546"/><rect x="1156.40" y="919.50" width="6.80" height="5.20" fill="#3bb546"/><rect x="1165.20" y="919.50" width="6.70" height="5.20" fill="#3bb546"/><rect x="1173.50" y="919.50" width="6.70" height="5.20" fill="#3bb546"/><rect x="1181.70" y="919.50" width="3.10" height="5.20" fill="#3bb546"/><rect x="1187.40" y="919.50" width="6.70" height="5.20" fill="#3bb546"/><rect x="1125.50" y="926.20" width="11.90" height="5.70" fill="#3bb546"/><rect x="1139.40" y="926.20" width="14.00" height="5.70" fill="#3bb546"/><rect x="1159.50" y="926.20" width="12.40" height="5.70" fill="#3bb546"/><rect x="1173.50" y="926.20" width="13.90" height="5.70" fill="#3bb546"/><rect x="1135.80" y="946.30" width="4.10" height="5.70" fill="#3bb546"/><rect x="1171.40" y="946.30" width="4.10" height="5.70" fill="#3bb546"/><rect x="1127.30" y="960.30" width="3.90" height="5.70" fill="#3bb546"/><rect x="1163.20" y="960.30" width="3.60" height="5.70" fill="#3bb546"/><rect x="1196.90" y="919.50" width="4.90" height="5.20" fill="#3bb546"/><rect x="1203.90" y="919.50" width="6.70" height="5.20" fill="#3bb546"/><rect x="1212.10" y="919.50" width="6.80" height="5.20" fill="#3bb546"/><rect x="1220.90" y="919.50" width="6.70" height="5.20" fill="#3bb546"/><rect x="1229.10" y="919.50" width="6.80" height="5.20" fill="#3bb546"/><rect x="1237.90" y="919.50" width="6.70" height="5.20" fill="#3bb546"/><rect x="1246.20" y="919.50" width="6.70" height="5.20" fill="#3bb546"/><rect x="1254.40" y="919.50" width="3.10" height="5.20" fill="#3bb546"/><rect x="1260.10" y="919.50" width="6.70" height="5.20" fill="#3bb546"/><rect x="1198.20" y="926.20" width="11.90" height="5.70" fill="#3bb546"/><rect x="1212.10" y="926.20" width="14.00" height="5.70" fill="#3bb546"/><rect x="1232.20" y="926.20" width="12.40" height="5.70" fill="#3bb546"/><rect x="1246.20" y="926.20" width="13.90" height="5.70" fill="#3bb546"/><rect x="1208.50" y="946.30" width="4.10" height="5.70" fill="#3bb546"/><rect x="1244.10" y="946.30" width="4.10" height="5.70" fill="#3bb546"/><rect x="1200.00" y="960.30" width="3.90" height="5.70" fill="#3bb546"/><rect x="1235.90" y="960.30" width="3.60" height="5.70" fill="#3bb546"/><rect x="1269.60" y="919.50" width="4.90" height="5.20" fill="#3bb546"/><rect x="1276.60" y="919.50" width="6.70" height="5.20" fill="#3bb546"/><rect x="1284.80" y="919.50" width="6.80" height="5.20" fill="#3bb546"/><rect x="1293.60" y="919.50" width="6.70" height="5.20" fill="#3bb546"/><rect x="1301.80" y="919.50" width="6.80" height="5.20" fill="#3bb546"/><rect x="1310.60" y="919.50" width="6.70" height="5.20" fill="#3bb546"/><rect x="1318.90" y="919.50" width="6.70" height="5.20" fill="#3bb546"/><rect x="1327.10" y="919.50" width="3.10" height="5.20" fill="#3bb546"/><rect x="1332.80" y="919.50" width="6.70" height="5.20" fill="#3bb546"/><rect x="1270.90" y="926.20" width="11.90" height="5.70" fill="#3bb546"/><rect x="1284.80" y="926.20" width="14.00" height="5.70" fill="#3bb546"/><rect x="1304.90" y="926.20" width="12.40" height="5.70" fill="#3bb546"/><rect x="1318.90" y="926.20" width="13.90" height="5.70" fill="#3bb546"/><rect x="1281.20" y="946.30" width="4.10" height="5.70" fill="#3bb546"/><rect x="1316.80" y="946.30" width="4.10" height="5.70" fill="#3bb546"/><rect x="1272.70" y="960.30" width="3.90" height="5.70" fill="#3bb546"/><rect x="1308.60" y="960.30" width="3.60" height="5.70" fill="#3bb546"/><rect x="1342.30" y="919.50" width="4.90" height="5.20" fill="#3bb546"/><rect x="1349.30" y="919.50" width="6.70" height="5.20" fill="#3bb546"/><rect x="1357.50" y="919.50" width="6.80" height="5.20" fill="#3bb546"/><rect x="1366.30" y="919.50" width="6.70" height="5.20" fill="#3bb546"/><rect x="1374.50" y="919.50" width="6.80" height="5.20" fill="#3bb546"/><rect x="1383.30" y="919.50" width="6.70" height="5.20" fill="#3bb546"/><rect x="1391.60" y="919.50" width="6.70" height="5.20" fill="#3bb546"/><rect x="1399.80" y="919.50" width="3.10" height="5.20" fill="#3bb546"/><rect x="1405.50" y="919.50" width="6.70" height="5.20" fill="#3bb546"/><rect x="1343.60" y="926.20" width="11.90" height="5.70" fill="#3bb546"/><rect x="1357.50" y="926.20" width="14.00" height="5.70" fill="#3bb546"/><rect x="1377.60" y="926.20" width="12.40" height="5.70" fill="#3bb546"/><rect x="1391.60" y="926.20" width="13.90" height="5.70" fill="#3bb546"/><rect x="1353.90" y="946.30" width="4.10" height="5.70" fill="#3bb546"/><rect x="1389.50" y="946.30" width="4.10" height="5.70" fill="#3bb546"/><rect x="1345.40" y="960.30" width="3.90" height="5.70" fill="#3bb546"/><rect x="1381.30" y="960.30" width="3.60" height="5.70" fill="#3bb546"/><rect x="1415.00" y="919.50" width="4.90" height="5.20" fill="#3bb546"/><rect x="1422.00" y="919.50" width="6.70" height="5.20" fill="#3bb546"/><rect x="1430.20" y="919.50" width="6.80" height="5.20" fill="#3bb546"/><rect x="1439.00" y="919.50" width="6.70" height="5.20" fill="#3bb546"/><rect x="1447.20" y="919.50" width="6.80" height="5.20" fill="#3bb546"/><rect x="1456.00" y="919.50" width="6.70" height="5.20" fill="#3bb546"/><rect x="1464.30" y="919.50" width="6.70" height="5.20" fill="#3bb546"/><rect x="1472.50" y="919.50" width="3.10" height="5.20" fill="#3bb546"/><rect x="1478.20" y="919.50" width="6.70" height="5.20" fill="#3bb546"/><rect x="1416.30" y="926.20" width="11.90" height="5.70" fill="#3bb546"/><rect x="1430.20" y="926.20" width="14.00" height="5.70" fill="#3bb546"/><rect x="1450.30" y="926.20" width="12.40" height="5.70" fill="#3bb546"/><rect x="1464.30" y="926.20" width="13.90" height="5.70" fill="#3bb546"/><rect x="1426.60" y="946.30" width="4.10" height="5.70" fill="#3bb546"/><rect x="1462.20" y="946.30" width="4.10" height="5.70" fill="#3bb546"/><rect x="1418.10" y="960.30" width="3.90" height="5.70" fill="#3bb546"/><rect x="1454.00" y="960.30" width="3.60" height="5.70" fill="#3bb546"/><rect x="1487.70" y="919.50" width="4.90" height="5.20" fill="#3bb546"/><rect x="1494.70" y="919.50" width="6.70" height="5.20" fill="#3bb546"/><rect x="1502.90" y="919.50" width="6.80" height="5.20" fill="#3bb546"/><rect x="1511.70" y="919.50" width="6.70" height="5.20" fill="#3bb546"/><rect x="1519.90" y="919.50" width="6.80" height="5.20" fill="#3bb546"/><rect x="1528.70" y="919.50" width="6.70" height="5.20" fill="#3bb546"/><rect x="1537.00" y="919.50" width="6.70" height="5.20" fill="#3bb546"/><rect x="1545.20" y="919.50" width="3.10" height="5.20" fill="#3bb546"/><rect x="1550.90" y="919.50" width="6.70" height="5.20" fill="#3bb546"/><rect x="1489.00" y="926.20" width="11.90" height="5.70" fill="#3bb546"/><rect x="1502.90" y="926.20" width="14.00" height="5.70" fill="#3bb546"/><rect x="1523.00" y="926.20" width="12.40" height="5.70" fill="#3bb546"/><rect x="1537.00" y="926.20" width="13.90" height="5.70" fill="#3bb546"/><rect x="1499.30" y="946.30" width="4.10" height="5.70" fill="#3bb546"/><rect x="1534.90" y="946.30" width="4.10" height="5.70" fill="#3bb546"/><rect x="1490.80" y="960.30" width="3.90" height="5.70" fill="#3bb546"/><rect x="1526.70" y="960.30" width="3.60" height="5.70" fill="#3bb546"/><rect x="1560.40" y="919.50" width="4.90" height="5.20" fill="#3bb546"/><rect x="1567.40" y="919.50" width="6.70" height="5.20" fill="#3bb546"/><rect x="1575.60" y="919.50" width="6.80" height="5.20" fill="#3bb546"/><rect x="1584.40" y="919.50" width="6.70" height="5.20" fill="#3bb546"/><rect x="1592.60" y="919.50" width="6.80" height="5.20" fill="#3bb546"/><rect x="1601.40" y="919.50" width="6.70" height="5.20" fill="#3bb546"/><rect x="1609.70" y="919.50" width="6.70" height="5.20" fill="#3bb546"/><rect x="1617.90" y="919.50" width="3.10" height="5.20" fill="#3bb546"/><rect x="1623.60" y="919.50" width="6.70" height="5.20" fill="#3bb546"/><rect x="1561.70" y="926.20" width="11.90" height="5.70" fill="#3bb546"/><rect x="1575.60" y="926.20" width="14.00" height="5.70" fill="#3bb546"/><rect x="1595.70" y="926.20" width="12.40" height="5.70" fill="#3bb546"/><rect x="1609.70" y="926.20" width="13.90" height="5.70" fill="#3bb546"/><rect x="1572.00" y="946.30" width="4.10" height="5.70" fill="#3bb546"/><rect x="1607.60" y="946.30" width="4.10" height="5.70" fill="#3bb546"/><rect x="1563.50" y="960.30" width="3.90" height="5.70" fill="#3bb546"/><rect x="1599.40" y="960.30" width="3.60" height="5.70" fill="#3bb546"/><rect x="1633.10" y="919.50" width="4.90" height="5.20" fill="#3bb546"/><rect x="1640.10" y="919.50" width="6.70" height="5.20" fill="#3bb546"/><rect x="1648.30" y="919.50" width="6.80" height="5.20" fill="#3bb546"/><rect x="1657.10" y="919.50" width="6.70" height="5.20" fill="#3bb546"/><rect x="1665.30" y="919.50" width="6.80" height="5.20" fill="#3bb546"/><rect x="1674.10" y="919.50" width="6.70" height="5.20" fill="#3bb546"/><rect x="1682.40" y="919.50" width="6.70" height="5.20" fill="#3bb546"/><rect x="1690.60" y="919.50" width="3.10" height="5.20" fill="#3bb546"/><rect x="1696.30" y="919.50" width="6.70" height="5.20" fill="#3bb546"/><rect x="1634.40" y="926.20" width="11.90" height="5.70" fill="#3bb546"/><rect x="1648.30" y="926.20" width="14.00" height="5.70" fill="#3bb546"/><rect x="1668.40" y="926.20" width="12.40" height="5.70" fill="#3bb546"/><rect x="1682.40" y="926.20" width="13.90" height="5.70" fill="#3bb546"/><rect x="1644.70" y="946.30" width="4.10" height="5.70" fill="#3bb546"/><rect x="1680.30" y="946.30" width="4.10" height="5.70" fill="#3bb546"/><rect x="1636.20" y="960.30" width="3.90" height="5.70" fill="#3bb546"/><rect x="1672.10" y="960.30" width="3.60" height="5.70" fill="#3bb546"/><rect x="1705.80" y="919.50" width="4.90" height="5.20" fill="#3bb546"/><rect x="1712.80" y="919.50" width="6.70" height="5.20" fill="#3bb546"/><rect x="1721.00" y="919.50" width="6.80" height="5.20" fill="#3bb546"/><rect x="1729.80" y="919.50" width="6.70" height="5.20" fill="#3bb546"/><rect x="1738.00" y="919.50" width="6.80" height="5.20" fill="#3bb546"/><rect x="1746.80" y="919.50" width="6.70" height="5.20" fill="#3bb546"/><rect x="1755.10" y="919.50" width="6.70" height="5.20" fill="#3bb546"/><rect x="1763.30" y="919.50" width="3.10" height="5.20" fill="#3bb546"/><rect x="1769.00" y="919.50" width="6.70" height="5.20" fill="#3bb546"/><rect x="1707.10" y="926.20" width="11.90" height="5.70" fill="#3bb546"/><rect x="1721.00" y="926.20" width="14.00" height="5.70" fill="#3bb546"/><rect x="1741.10" y="926.20" width="12.40" height="5.70" fill="#3bb546"/><rect x="1755.10" y="926.20" width="13.90" height="5.70" fill="#3bb546"/><rect x="1717.40" y="946.30" width="4.10" height="5.70" fill="#3bb546"/><rect x="1753.00" y="946.30" width="4.10" height="5.70" fill="#3bb546"/><rect x="1708.90" y="960.30" width="3.90" height="5.70" fill="#3bb546"/><rect x="1744.80" y="960.30" width="3.60" height="5.70" fill="#3bb546"/><rect x="1778.50" y="919.50" width="4.90" height="5.20" fill="#3bb546"/><rect x="1785.50" y="919.50" width="6.70" height="5.20" fill="#3bb546"/><rect x="1793.70" y="919.50" width="6.80" height="5.20" fill="#3bb546"/><rect x="1802.50" y="919.50" width="6.70" height="5.20" fill="#3bb546"/><rect x="1810.70" y="919.50" width="6.80" height="5.20" fill="#3bb546"/><rect x="1819.50" y="919.50" width="6.70" height="5.20" fill="#3bb546"/><rect x="1827.80" y="919.50" width="6.70" height="5.20" fill="#3bb546"/><rect x="1836.00" y="919.50" width="3.10" height="5.20" fill="#3bb546"/><rect x="1841.70" y="919.50" width="6.70" height="5.20" fill="#3bb546"/><rect x="1779.80" y="926.20" width="11.90" height="5.70" fill="#3bb546"/><rect x="1793.70" y="926.20" width="14.00" height="5.70" fill="#3bb546"/><rect x="1813.80" y="926.20" width="12.40" height="5.70" fill="#3bb546"/><rect x="1827.80" y="926.20" width="13.90" height="5.70" fill="#3bb546"/><rect x="1790.10" y="946.30" width="4.10" height="5.70" fill="#3bb546"/><rect x="1825.70" y="946.30" width="4.10" height="5.70" fill="#3bb546"/><rect x="1781.60" y="960.30" width="3.90" height="5.70" fill="#3bb546"/><rect x="1817.50" y="960.30" width="3.60" height="5.70" fill="#3bb546"/><rect x="1851.20" y="919.50" width="4.90" height="5.20" fill="#3bb546"/><rect x="1858.20" y="919.50" width="6.70" height="5.20" fill="#3bb546"/><rect x="1866.40" y="919.50" width="6.80" height="5.20" fill="#3bb546"/><rect x="1875.20" y="919.50" width="6.70" height="5.20" fill="#3bb546"/><rect x="1883.40" y="919.50" width="6.80" height="5.20" fill="#3bb546"/><rect x="1892.20" y="919.50" width="6.70" height="5.20" fill="#3bb546"/><rect x="1900.50" y="919.50" width="6.70" height="5.20" fill="#3bb546"/><rect x="1908.70" y="919.50" width="3.10" height="5.20" fill="#3bb546"/><rect x="1914.40" y="919.50" width="3.60" height="5.20" fill="#3bb546"/><rect x="1852.50" y="926.20" width="11.90" height="5.70" fill="#3bb546"/><rect x="1866.40" y="926.20" width="14.00" height="5.70" fill="#3bb546"/><rect x="1886.50" y="926.20" width="12.40" height="5.70" fill="#3bb546"/><rect x="1900.50" y="926.20" width="13.90" height="5.70" fill="#3bb546"/><rect x="1862.80" y="946.30" width="4.10" height="5.70" fill="#3bb546"/><rect x="1898.40" y="946.30" width="4.10" height="5.70" fill="#3bb546"/><rect x="1854.30" y="960.30" width="3.90" height="5.70" fill="#3bb546"/><rect x="1890.20" y="960.30" width="3.60" height="5.70" fill="#3bb546"/><text x="700" y="888" font-family="Liberation Sans" font-weight="bold" font-size="19" fill="#5cf263">...8</text><rect x="1063.30" y="993.90" width="21.70" height="121.10" rx="7" fill="#176820"/><rect x="1063.30" y="1039.70" width="20.00" height="5.30" fill="#4cf95a"/><rect x="1544.50" y="993.90" width="21.70" height="121.10" rx="7" fill="#176820"/><rect x="1544.50" y="1039.70" width="20.00" height="5.30" fill="#4cf95a"/><rect x="172.25" y="1128.20" width="1745.75" height="119.55" rx="8" fill="#176820"/><path d="M650.50,1127.70 Q655.80,1128.20 657.00,1133.20 Q658.20,1128.20 663.50,1127.70 Z" fill="#161618"/><path d="M650.50,1248.25 Q655.80,1247.75 657.00,1242.75 Q658.20,1247.75 663.50,1248.25 Z" fill="#161618"/><path d="M1134.50,1127.70 Q1139.80,1128.20 1141.00,1133.20 Q1142.20,1128.20 1147.50,1127.70 Z" fill="#161618"/><path d="M1134.50,1248.25 Q1139.80,1247.75 1141.00,1242.75 Q1142.20,1247.75 1147.50,1248.25 Z" fill="#161618"/><path d="M1619.50,1127.70 Q1624.80,1128.20 1626.00,1133.20 Q1627.20,1128.20 1632.50,1127.70 Z" fill="#161618"/><path d="M1619.50,1248.25 Q1624.80,1247.75 1626.00,1242.75 Q1627.20,1247.75 1632.50,1248.25 Z" fill="#161618"/><rect x="179.25" y="1193.50" width="472.75" height="5.30" fill="#4cf95a"/><rect x="666.00" y="1193.50" width="470.00" height="5.30" fill="#3bb546"/><rect x="1150.00" y="1193.50" width="471.00" height="5.30" fill="#3bb546"/><rect x="1635.00" y="1193.50" width="283.00" height="5.30" fill="#3bb546"/><text x="185.7" y="1155.6" font-family="Liberation Sans" font-weight="bold" font-size="19" fill="#5cf263">WHO DID THIS TO YOU ROGER!!!!</text><rect x="693" y="1237" width="534" height="9" rx="4.5" fill="#ffffff" fill-opacity="0.24"/><rect x="162.8" y="701.5" width="4.6" height="36.5" rx="2.3" fill="#3a3a3e" stroke="#6c6c70" stroke-width="1.1"/><rect x="1746.2" y="184" width="5" height="1076" fill="#000" fill-opacity="0.5"/><rect x="1747" y="180" width="2.6" height="1080" fill="#f4f4f4"/><path d="M1726.2,139.5 H1770 V162 L1748,183 L1726.2,162 Z" fill="#3e3e40" fill-opacity="0.92" stroke="#000" stroke-width="5" stroke-opacity="0.6" stroke-linejoin="miter"/><path d="M1726.2,139.5 H1770 V162 L1748,183 L1726.2,162 Z" fill="#3e3e40" fill-opacity="0.85" stroke="#f0f0f0" stroke-width="2.4" stroke-linejoin="miter"/><rect x="1748.5" y="141" width="2.2" height="38" fill="#8c8c8e" fill-opacity="0.9"/><text x="28" y="26.9" font-family="Liberation Sans" font-weight="bold" font-size="21.5" fill="#fff">12:56 AM</text><text x="140" y="26.9" font-family="Liberation Sans" font-weight="bold" font-size="21.3" fill="#fff">Sat Sep 13</text><rect x="1597.7" y="5" width="81.8" height="30.4" rx="15.2" fill="#d9283a"/><circle cx="1637.6" cy="19.8" r="9.4" fill="none" stroke="#fff" stroke-width="3"/><circle cx="1637.6" cy="19.8" r="4.4" fill="#fff"/><circle cx="1698.3" cy="20.4" r="6.3" fill="#f09a1c"/><g fill="none" stroke="#fff" stroke-width="4.2" stroke-linecap="round"><path d="M1712.6,17.4 A15.6,15.6 0 0 1 1734.6,17.4"/><path d="M1716.74,21.54 A9.7,9.7 0 0 1 1730.46,21.54"/></g><path d="M1719.6,24.4 A5.6,5.6 0 0 1 1727.6,24.4 L1723.6,28.4 Z" fill="#fff" stroke="#fff" stroke-width="1" stroke-linejoin="round"/><circle cx="1745.9" cy="13.6" r="3.4" fill="#fff"/><circle cx="1756.7" cy="13.6" r="3.4" fill="#fff"/><path d="M1746.3,26.4 L1744.6,28.4 M1756.3,26.4 L1758,28.4" stroke="#fff" stroke-width="2.2" stroke-linecap="round"/><circle cx="1751.3" cy="20" r="7.9" fill="#fff" stroke="#232325" stroke-width="1.3"/><path d="M1751.3,16 V20.6 H1747.6" stroke="#232325" stroke-width="1.4" fill="none"/><path d="M1774.7,12.0 A8.12,8.12 0 1 0 1784.8,21.7 A7.86,7.86 0 0 1 1774.7,12.0 Z" fill="#fff"/><text x="1794" y="27.4" font-family="Liberation Sans" font-weight="bold" font-size="21.5" letter-spacing="2" fill="#fff">49%</text><rect x="1851" y="11.6" width="39" height="17.6" rx="4.5" fill="none" stroke="#77777a" stroke-width="2"/><rect x="1853.2" y="14" width="17.3" height="13" rx="2" fill="#f5dc1c"/><path d="M1892.3,17.3 Q1894.6,20.4 1892.3,23.6 Z" fill="#77777a"/><path d="M45,61 H57.6 L72.8,76.2 V97 Q72.8,101 68.8,101 H45 Q41,101 41,97 V65 Q41,61 45,61 Z" fill="#cfcfd1"/><path d="M57.4,60 V75.6 Q57.4,77.4 59.2,77.4 H74" fill="none" stroke="#242426" stroke-width="2.2"/><path d="M58.8,61 L72.8,75 H58.8 Z" fill="#cfcfd1"/><rect x="127" y="53" width="142" height="55.4" rx="8" fill="#1c1c1e"/><rect x="195" y="53" width="1.6" height="55.4" fill="#242426"/><g fill="none" stroke="#cfcfd1" stroke-width="3.6"><rect x="129.3" y="75.7" width="11.6" height="11.6" rx="3"/><rect x="146.8" y="68.8" width="24.6" height="25.6" rx="4"/><rect x="176.8" y="75.7" width="11.6" height="11.6" rx="3"/></g><path d="M225.00,70.90 L227.33,72.05 L226.65,74.65 L224.06,74.52 L222.83,76.13 L223.67,78.60 L221.35,79.95 L219.61,78.02 L217.60,78.30 L216.45,80.63 L213.85,79.95 L213.98,77.36 L212.37,76.13 L209.90,76.97 L208.55,74.65 L210.48,72.91 L210.20,70.90 L207.87,69.75 L208.55,67.15 L211.14,67.28 L212.37,65.67 L211.53,63.20 L213.85,61.85 L215.59,63.78 L217.60,63.50 L218.75,61.17 L221.35,61.85 L221.22,64.44 L222.83,65.67 L225.30,64.83 L226.65,67.15 L224.72,68.89 Z" fill="#cfcfd1" stroke="#cfcfd1" stroke-width="0.8" stroke-linejoin="round"/><circle cx="217.6" cy="70.9" r="2.5" fill="#1c1c1e"/><g transform="translate(222.6,96.8) rotate(41) scale(1.08,0.97)" fill="#cfcfd1"><path d="M0,0 C-5.4,0 -7.6,-3.4 -7.6,-8.4 C-7.6,-12.4 -5.4,-14.4 -5.2,-17.2 C-5,-19.6 -6.6,-21.4 -6.6,-25 C-6.6,-29.6 -3.8,-32 0,-32 C3.8,-32 6.6,-29.6 6.6,-25 C6.6,-21.4 5,-19.6 5.2,-17.2 C5.4,-14.4 7.6,-12.4 7.6,-8.4 C7.6,-3.4 5.4,0 0,0 Z"/><path d="M-2,-31 L-1.7,-41 L1.7,-41 L2,-31 Z"/><rect x="-2.6" y="-48.5" width="5.2" height="9" rx="2.5"/><path d="M-4.2,-41.5 H4.2 M-4.2,-44.5 H4.2" stroke="#cfcfd1" stroke-width="1.5"/></g><rect x="307.3" y="53.7" width="143" height="54.7" rx="8" fill="#1c1c1e"/><rect x="377" y="53.7" width="1.6" height="54.7" fill="#242426"/><g stroke="#cfcfd1" stroke-width="3.5" stroke-linecap="round" fill="none"><path d="M327.4,66.5 V97.3 M340.1,66.5 V97.3 M352.9,66.5 V97.3"/></g><g stroke="#cfcfd1" stroke-width="3" fill="#1c1c1e"><circle cx="327.4" cy="86.6" r="4.6"/><circle cx="340.1" cy="75.6" r="4.6"/><circle cx="352.9" cy="86.6" r="4.6"/></g><path d="M409.4,69.8 H396.1 V92.6 M396.1,81.6 H409" fill="none" stroke="#cfcfd1" stroke-width="4.7" stroke-linecap="round" stroke-linejoin="round"/><path d="M415.4,69.6 L433.6,92.8 M433.6,69.6 L415.4,92.8" fill="none" stroke="#cfcfd1" stroke-width="4.7" stroke-linecap="round"/><path d="M587.2,64.8 L574,75.6 L587.2,86.4 M574,75.6 H595.5 A10.5,10.5 0 0 1 595.5,96.6 H590" fill="none" stroke="#cfcfd1" stroke-width="4.2" stroke-linecap="round" stroke-linejoin="round"/><rect x="815" y="51.7" width="291.7" height="57.3" rx="8" fill="#1c1c1e"/><rect x="900" y="51.7" width="119" height="59" fill="#1c4a21"/><rect x="837.5" y="64" width="33.3" height="33.5" rx="4" fill="#c9c8cb"/><path d="M946.5,66.5 Q945,63.8 947.6,65.2 L974,79.4 Q976.4,81 974,82.6 L947.6,96.8 Q945,98.2 946.5,95.5 Z" fill="#50e160"/><circle cx="1063.3" cy="81.7" r="20.3" fill="#ea2a3b"/><rect x="1160.6" y="71" width="240" height="19.6" rx="9.8" fill="#1b1b1d"/><rect x="1160.6" y="74.3" width="64.7" height="5.5" rx="2.7" fill="#5fe26b"/><rect x="1160.6" y="82.8" width="64.7" height="5.2" rx="2.6" fill="#5fe26b"/><circle cx="1199.6" cy="81.3" r="16" fill="#8a8a8c" fill-opacity="0.42" stroke="#d0d0d2" stroke-width="2"/><g fill="none" stroke="#cfcfd1" stroke-width="3.5" stroke-linejoin="round" stroke-linecap="round"><path d="M1470.5,74.5 L1466,66.5 Q1463.4,62.5 1460.8,66.5 L1447.8,93.5 Q1446.4,97.1 1450.2,97.1 H1476.6 Q1480.4,97.1 1479,93.5 L1474.8,84.6"/><path d="M1451,88.4 H1476"/><path d="M1462,86.3 L1479,72.6"/></g><path d="M1463.3,72.2 V82.4" stroke="#cfcfd1" stroke-width="2.6" stroke-linecap="round"/><circle cx="1685.1" cy="80.1" r="15.1" fill="none" stroke="#cfcfd1" stroke-width="5.6"/><path d="M1665,97.8 H1692" stroke="#cfcfd1" stroke-width="5" stroke-linecap="round"/><rect x="1685.9" y="88.3" width="32" height="23.8" rx="11.9" fill="#1a7ef3" stroke="#111" stroke-width="1.5"/><text x="1702" y="107.6" text-anchor="middle" font-family="Liberation Sans" font-weight="bold" font-size="19" fill="#fff">2</text><path d="M1791.40,81.20 L1794.28,82.16 L1794.05,84.38 L1791.04,84.73 L1790.55,86.58 L1792.99,88.38 L1792.09,90.42 L1789.11,89.82 L1788.08,91.43 L1789.84,93.89 L1788.35,95.55 L1785.71,94.07 L1784.23,95.28 L1785.15,98.17 L1783.22,99.29 L1781.16,97.06 L1779.38,97.75 L1779.36,100.78 L1777.18,101.25 L1775.91,98.49 L1774.00,98.60 L1773.04,101.48 L1770.82,101.25 L1770.47,98.24 L1768.62,97.75 L1766.82,100.19 L1764.78,99.29 L1765.38,96.31 L1763.77,95.28 L1761.31,97.04 L1759.65,95.55 L1761.13,92.91 L1759.92,91.43 L1757.03,92.35 L1755.91,90.42 L1758.14,88.36 L1757.45,86.58 L1754.42,86.56 L1753.95,84.38 L1756.71,83.11 L1756.60,81.20 L1753.72,80.24 L1753.95,78.02 L1756.96,77.67 L1757.45,75.82 L1755.01,74.02 L1755.91,71.98 L1758.89,72.58 L1759.92,70.97 L1758.16,68.51 L1759.65,66.85 L1762.29,68.33 L1763.77,67.12 L1762.85,64.23 L1764.78,63.11 L1766.84,65.34 L1768.62,64.65 L1768.64,61.62 L1770.82,61.15 L1772.09,63.91 L1774.00,63.80 L1774.96,60.92 L1777.18,61.15 L1777.53,64.16 L1779.38,64.65 L1781.18,62.21 L1783.22,63.11 L1782.62,66.09 L1784.23,67.12 L1786.69,65.36 L1788.35,66.85 L1786.87,69.49 L1788.08,70.97 L1790.97,70.05 L1792.09,71.98 L1789.86,74.04 L1790.55,75.82 L1793.58,75.84 L1794.05,78.02 L1791.29,79.29 Z" fill="#cfcfd1" stroke="#cfcfd1" stroke-width="0.8" stroke-linejoin="round"/><circle cx="1774" cy="81.2" r="13.7" fill="#242426"/><g stroke="#cfcfd1" stroke-width="3.1" stroke-linecap="butt"><path d="M1774,81.2 L1766.6,68.4 M1774,81.2 L1788.5,81.2 M1774,81.2 L1766.6,94"/></g><circle cx="1774" cy="81.2" r="3.4" fill="#242426" stroke="#cfcfd1" stroke-width="2.4"/><circle cx="1861.4" cy="80.9" r="19.4" fill="#cfcfd1"/><path d="M1856.9,76.6 A4.7,4.7 0 1 1 1864.6,80.2 Q1861.4,82.2 1861.4,84.6" fill="none" stroke="#1c1c1e" stroke-width="3" stroke-linecap="round"/><circle cx="1861.2" cy="88.4" r="1.9" fill="#1c1c1e"/><g transform="translate(0,0.00)"><path d="M45.2,273.3 L46.8,259.2" stroke="#2e1408" stroke-width="1.3" stroke-linecap="round"/><path d="M46.3,259.9 L47.1,256.5" stroke="#8a5a4a" stroke-width="1.8" stroke-linecap="round"/><g transform="rotate(8 40.5 305.0)"><path d="M40.50,271.00 C44.35,271.00 47.50,273.04 47.85,278.48 C48.02,282.56 46.10,283.92 45.92,287.32 C45.75,290.72 49.25,291.40 49.25,297.52 C49.25,303.64 45.75,305.00 40.50,305.00 C35.25,305.00 31.75,303.64 31.75,297.52 C31.75,291.40 35.25,290.72 35.08,287.32 C34.90,283.92 32.98,282.56 33.15,278.48 C33.50,273.04 36.65,271.00 40.50,271.00 Z" fill="url(#wood)"/><path d="M43.0,288.0 V295.5" stroke="#3a1206" stroke-width="0.9"/><path d="M40.5,271.7 L40.0,289.7" stroke="#24100a" stroke-width="1.4" stroke-opacity="0.9"/><path d="M36.6,289.7 H43.6" stroke="#e0a868" stroke-width="1.1" stroke-opacity="0.75"/><path d="M39.1,294.1 L39.5,304.0" stroke="#140804" stroke-width="1.6"/><path d="M39.5,305.0 V309.0" stroke="#999" stroke-width="1"/></g><path d="M61.3,271.2 L63.7,257.4" stroke="#2e1408" stroke-width="1.3" stroke-linecap="round"/><path d="M63.2,258.1 L64.0,254.5" stroke="#8a5a4a" stroke-width="1.8" stroke-linecap="round"/><g transform="rotate(6 57.5 305.0)"><path d="M57.50,269.00 C60.91,269.00 63.70,271.16 64.01,276.92 C64.17,281.24 62.46,282.68 62.30,286.28 C62.15,289.88 65.25,290.60 65.25,297.08 C65.25,303.56 62.15,305.00 57.50,305.00 C52.85,305.00 49.75,303.56 49.75,297.08 C49.75,290.60 52.85,289.88 52.70,286.28 C52.54,282.68 50.84,281.24 50.99,276.92 C51.30,271.16 54.09,269.00 57.50,269.00 Z" fill="url(#wood)"/><path d="M59.7,287.0 V294.9" stroke="#3a1206" stroke-width="0.8"/><path d="M57.5,269.7 L57.0,288.8" stroke="#24100a" stroke-width="1.2" stroke-opacity="0.9"/><path d="M54.1,288.8 H60.3" stroke="#e0a868" stroke-width="0.9" stroke-opacity="0.75"/><path d="M56.3,293.5 L56.6,303.9" stroke="#140804" stroke-width="1.4"/><path d="M56.6,305.0 V309.0" stroke="#999" stroke-width="1"/></g><path d="M87.1,245.9 L91.4,223.1" stroke="#2e1408" stroke-width="2.1" stroke-linecap="round"/><path d="M90.5,224.1 L92.0,218.8" stroke="#8a5a4a" stroke-width="2.9" stroke-linecap="round"/><g transform="rotate(6 81.5 297.0)"><path d="M81.50,243.60 C87.77,243.60 92.90,246.80 93.47,255.35 C93.75,261.76 90.62,263.89 90.33,269.23 C90.05,274.57 95.75,275.64 95.75,285.25 C95.75,294.86 90.05,297.00 81.50,297.00 C72.95,297.00 67.25,294.86 67.25,285.25 C67.25,275.64 72.95,274.57 72.67,269.23 C72.38,263.89 69.25,261.76 69.53,255.35 C70.10,246.80 75.23,243.60 81.50,243.60 Z" fill="url(#wood)"/><path d="M85.5,270.3 V282.0" stroke="#3a1206" stroke-width="1.4"/><path d="M81.5,244.7 L80.6,273.0" stroke="#24100a" stroke-width="2.3" stroke-opacity="0.9"/><path d="M75.2,273.0 H86.6" stroke="#e0a868" stroke-width="1.7" stroke-opacity="0.75"/><path d="M79.2,279.9 L79.8,295.4" stroke="#140804" stroke-width="2.6"/><path d="M79.8,297.0 V301.0" stroke="#999" stroke-width="1"/></g><path d="M121.1,235.1 L125.0,206.5" stroke="#2e1408" stroke-width="2.8" stroke-linecap="round"/><path d="M123.9,207.8 L125.7,201.0" stroke="#8a5a4a" stroke-width="3.7" stroke-linecap="round"/><g transform="rotate(6 114.0 301.0)"><path d="M114.00,232.70 C119.52,232.70 123.20,236.11 125.78,239.53 C129.46,243.63 130.93,253.19 128.72,261.39 C127.25,266.85 127.62,270.95 130.56,276.41 C133.50,283.24 133.50,294.17 128.72,298.95 C125.04,301.68 117.68,301.00 114.00,301.00 C110.32,301.00 102.96,301.68 99.28,298.95 C94.50,294.17 94.50,283.24 97.44,276.41 C100.38,270.95 100.75,266.85 99.28,261.39 C97.07,253.19 98.54,243.63 102.22,239.53 C104.80,236.11 108.48,232.70 114.00,232.70 Z" fill="url(#wood)"/><path d="M119.2,266.9 V281.9" stroke="#3a1206" stroke-width="1.8"/><path d="M114.0,234.1 L112.9,270.3" stroke="#24100a" stroke-width="2.9" stroke-opacity="0.9"/><path d="M105.9,270.3 H120.6" stroke="#e0a868" stroke-width="2.2" stroke-opacity="0.75"/><path d="M111.1,279.1 L111.8,299.0" stroke="#140804" stroke-width="3.3"/><path d="M111.8,301.0 V305.0" stroke="#999" stroke-width="1"/></g></g><g transform="translate(0,133.75)"><path d="M45.2,273.3 L46.8,259.2" stroke="#2e1408" stroke-width="1.3" stroke-linecap="round"/><path d="M46.3,259.9 L47.1,256.5" stroke="#8a5a4a" stroke-width="1.8" stroke-linecap="round"/><g transform="rotate(8 40.5 305.0)"><path d="M40.50,271.00 C44.35,271.00 47.50,273.04 47.85,278.48 C48.02,282.56 46.10,283.92 45.92,287.32 C45.75,290.72 49.25,291.40 49.25,297.52 C49.25,303.64 45.75,305.00 40.50,305.00 C35.25,305.00 31.75,303.64 31.75,297.52 C31.75,291.40 35.25,290.72 35.08,287.32 C34.90,283.92 32.98,282.56 33.15,278.48 C33.50,273.04 36.65,271.00 40.50,271.00 Z" fill="url(#wood)"/><path d="M43.0,288.0 V295.5" stroke="#3a1206" stroke-width="0.9"/><path d="M40.5,271.7 L40.0,289.7" stroke="#24100a" stroke-width="1.4" stroke-opacity="0.9"/><path d="M36.6,289.7 H43.6" stroke="#e0a868" stroke-width="1.1" stroke-opacity="0.75"/><path d="M39.1,294.1 L39.5,304.0" stroke="#140804" stroke-width="1.6"/><path d="M39.5,305.0 V309.0" stroke="#999" stroke-width="1"/></g><path d="M61.3,271.2 L63.7,257.4" stroke="#2e1408" stroke-width="1.3" stroke-linecap="round"/><path d="M63.2,258.1 L64.0,254.5" stroke="#8a5a4a" stroke-width="1.8" stroke-linecap="round"/><g transform="rotate(6 57.5 305.0)"><path d="M57.50,269.00 C60.91,269.00 63.70,271.16 64.01,276.92 C64.17,281.24 62.46,282.68 62.30,286.28 C62.15,289.88 65.25,290.60 65.25,297.08 C65.25,303.56 62.15,305.00 57.50,305.00 C52.85,305.00 49.75,303.56 49.75,297.08 C49.75,290.60 52.85,289.88 52.70,286.28 C52.54,282.68 50.84,281.24 50.99,276.92 C51.30,271.16 54.09,269.00 57.50,269.00 Z" fill="url(#wood)"/><path d="M59.7,287.0 V294.9" stroke="#3a1206" stroke-width="0.8"/><path d="M57.5,269.7 L57.0,288.8" stroke="#24100a" stroke-width="1.2" stroke-opacity="0.9"/><path d="M54.1,288.8 H60.3" stroke="#e0a868" stroke-width="0.9" stroke-opacity="0.75"/><path d="M56.3,293.5 L56.6,303.9" stroke="#140804" stroke-width="1.4"/><path d="M56.6,305.0 V309.0" stroke="#999" stroke-width="1"/></g><path d="M87.1,245.9 L91.4,223.1" stroke="#2e1408" stroke-width="2.1" stroke-linecap="round"/><path d="M90.5,224.1 L92.0,218.8" stroke="#8a5a4a" stroke-width="2.9" stroke-linecap="round"/><g transform="rotate(6 81.5 297.0)"><path d="M81.50,243.60 C87.77,243.60 92.90,246.80 93.47,255.35 C93.75,261.76 90.62,263.89 90.33,269.23 C90.05,274.57 95.75,275.64 95.75,285.25 C95.75,294.86 90.05,297.00 81.50,297.00 C72.95,297.00 67.25,294.86 67.25,285.25 C67.25,275.64 72.95,274.57 72.67,269.23 C72.38,263.89 69.25,261.76 69.53,255.35 C70.10,246.80 75.23,243.60 81.50,243.60 Z" fill="url(#wood)"/><path d="M85.5,270.3 V282.0" stroke="#3a1206" stroke-width="1.4"/><path d="M81.5,244.7 L80.6,273.0" stroke="#24100a" stroke-width="2.3" stroke-opacity="0.9"/><path d="M75.2,273.0 H86.6" stroke="#e0a868" stroke-width="1.7" stroke-opacity="0.75"/><path d="M79.2,279.9 L79.8,295.4" stroke="#140804" stroke-width="2.6"/><path d="M79.8,297.0 V301.0" stroke="#999" stroke-width="1"/></g><path d="M121.1,235.1 L125.0,206.5" stroke="#2e1408" stroke-width="2.8" stroke-linecap="round"/><path d="M123.9,207.8 L125.7,201.0" stroke="#8a5a4a" stroke-width="3.7" stroke-linecap="round"/><g transform="rotate(6 114.0 301.0)"><path d="M114.00,232.70 C119.52,232.70 123.20,236.11 125.78,239.53 C129.46,243.63 130.93,253.19 128.72,261.39 C127.25,266.85 127.62,270.95 130.56,276.41 C133.50,283.24 133.50,294.17 128.72,298.95 C125.04,301.68 117.68,301.00 114.00,301.00 C110.32,301.00 102.96,301.68 99.28,298.95 C94.50,294.17 94.50,283.24 97.44,276.41 C100.38,270.95 100.75,266.85 99.28,261.39 C97.07,253.19 98.54,243.63 102.22,239.53 C104.80,236.11 108.48,232.70 114.00,232.70 Z" fill="url(#wood)"/><path d="M119.2,266.9 V281.9" stroke="#3a1206" stroke-width="1.8"/><path d="M114.0,234.1 L112.9,270.3" stroke="#24100a" stroke-width="2.9" stroke-opacity="0.9"/><path d="M105.9,270.3 H120.6" stroke="#e0a868" stroke-width="2.2" stroke-opacity="0.75"/><path d="M111.1,279.1 L111.8,299.0" stroke="#140804" stroke-width="3.3"/><path d="M111.8,301.0 V305.0" stroke="#999" stroke-width="1"/></g></g><g transform="translate(0,267.50)"><path d="M45.2,273.3 L46.8,259.2" stroke="#2e1408" stroke-width="1.3" stroke-linecap="round"/><path d="M46.3,259.9 L47.1,256.5" stroke="#8a5a4a" stroke-width="1.8" stroke-linecap="round"/><g transform="rotate(8 40.5 305.0)"><path d="M40.50,271.00 C44.35,271.00 47.50,273.04 47.85,278.48 C48.02,282.56 46.10,283.92 45.92,287.32 C45.75,290.72 49.25,291.40 49.25,297.52 C49.25,303.64 45.75,305.00 40.50,305.00 C35.25,305.00 31.75,303.64 31.75,297.52 C31.75,291.40 35.25,290.72 35.08,287.32 C34.90,283.92 32.98,282.56 33.15,278.48 C33.50,273.04 36.65,271.00 40.50,271.00 Z" fill="url(#wood)"/><path d="M43.0,288.0 V295.5" stroke="#3a1206" stroke-width="0.9"/><path d="M40.5,271.7 L40.0,289.7" stroke="#24100a" stroke-width="1.4" stroke-opacity="0.9"/><path d="M36.6,289.7 H43.6" stroke="#e0a868" stroke-width="1.1" stroke-opacity="0.75"/><path d="M39.1,294.1 L39.5,304.0" stroke="#140804" stroke-width="1.6"/><path d="M39.5,305.0 V309.0" stroke="#999" stroke-width="1"/></g><path d="M61.3,271.2 L63.7,257.4" stroke="#2e1408" stroke-width="1.3" stroke-linecap="round"/><path d="M63.2,258.1 L64.0,254.5" stroke="#8a5a4a" stroke-width="1.8" stroke-linecap="round"/><g transform="rotate(6 57.5 305.0)"><path d="M57.50,269.00 C60.91,269.00 63.70,271.16 64.01,276.92 C64.17,281.24 62.46,282.68 62.30,286.28 C62.15,289.88 65.25,290.60 65.25,297.08 C65.25,303.56 62.15,305.00 57.50,305.00 C52.85,305.00 49.75,303.56 49.75,297.08 C49.75,290.60 52.85,289.88 52.70,286.28 C52.54,282.68 50.84,281.24 50.99,276.92 C51.30,271.16 54.09,269.00 57.50,269.00 Z" fill="url(#wood)"/><path d="M59.7,287.0 V294.9" stroke="#3a1206" stroke-width="0.8"/><path d="M57.5,269.7 L57.0,288.8" stroke="#24100a" stroke-width="1.2" stroke-opacity="0.9"/><path d="M54.1,288.8 H60.3" stroke="#e0a868" stroke-width="0.9" stroke-opacity="0.75"/><path d="M56.3,293.5 L56.6,303.9" stroke="#140804" stroke-width="1.4"/><path d="M56.6,305.0 V309.0" stroke="#999" stroke-width="1"/></g><path d="M87.1,245.9 L91.4,223.1" stroke="#2e1408" stroke-width="2.1" stroke-linecap="round"/><path d="M90.5,224.1 L92.0,218.8" stroke="#8a5a4a" stroke-width="2.9" stroke-linecap="round"/><g transform="rotate(6 81.5 297.0)"><path d="M81.50,243.60 C87.77,243.60 92.90,246.80 93.47,255.35 C93.75,261.76 90.62,263.89 90.33,269.23 C90.05,274.57 95.75,275.64 95.75,285.25 C95.75,294.86 90.05,297.00 81.50,297.00 C72.95,297.00 67.25,294.86 67.25,285.25 C67.25,275.64 72.95,274.57 72.67,269.23 C72.38,263.89 69.25,261.76 69.53,255.35 C70.10,246.80 75.23,243.60 81.50,243.60 Z" fill="url(#wood)"/><path d="M85.5,270.3 V282.0" stroke="#3a1206" stroke-width="1.4"/><path d="M81.5,244.7 L80.6,273.0" stroke="#24100a" stroke-width="2.3" stroke-opacity="0.9"/><path d="M75.2,273.0 H86.6" stroke="#e0a868" stroke-width="1.7" stroke-opacity="0.75"/><path d="M79.2,279.9 L79.8,295.4" stroke="#140804" stroke-width="2.6"/><path d="M79.8,297.0 V301.0" stroke="#999" stroke-width="1"/></g><path d="M121.1,235.1 L125.0,206.5" stroke="#2e1408" stroke-width="2.8" stroke-linecap="round"/><path d="M123.9,207.8 L125.7,201.0" stroke="#8a5a4a" stroke-width="3.7" stroke-linecap="round"/><g transform="rotate(6 114.0 301.0)"><path d="M114.00,232.70 C119.52,232.70 123.20,236.11 125.78,239.53 C129.46,243.63 130.93,253.19 128.72,261.39 C127.25,266.85 127.62,270.95 130.56,276.41 C133.50,283.24 133.50,294.17 128.72,298.95 C125.04,301.68 117.68,301.00 114.00,301.00 C110.32,301.00 102.96,301.68 99.28,298.95 C94.50,294.17 94.50,283.24 97.44,276.41 C100.38,270.95 100.75,266.85 99.28,261.39 C97.07,253.19 98.54,243.63 102.22,239.53 C104.80,236.11 108.48,232.70 114.00,232.70 Z" fill="url(#wood)"/><path d="M119.2,266.9 V281.9" stroke="#3a1206" stroke-width="1.8"/><path d="M114.0,234.1 L112.9,270.3" stroke="#24100a" stroke-width="2.9" stroke-opacity="0.9"/><path d="M105.9,270.3 H120.6" stroke="#e0a868" stroke-width="2.2" stroke-opacity="0.75"/><path d="M111.1,279.1 L111.8,299.0" stroke="#140804" stroke-width="3.3"/><path d="M111.8,301.0 V305.0" stroke="#999" stroke-width="1"/></g></g><g transform="translate(0,0.00)"><path d="M50,684 L74,678 L120,688 L94,704 Z" fill="#000" fill-opacity="0.12"/><path d="M65.3,632 L102.9,696 M103.8,640 L63.6,680.3" stroke="#0e0e10" stroke-width="2" stroke-linecap="round"/><path d="M89,700.4 L118.6,690 M50,684 L71,679" stroke="#0e0e10" stroke-width="1.7" stroke-linecap="round"/><path d="M104.6,634 L127,619.5 L127,625.5 L104.6,640 Z" fill="#3a3a3e"/><path d="M49.6,624.5 L104.6,634 L104.6,640 L50,630.5 Z" fill="#5a2e1c"/><path d="M49.6,624.5 L75.5,613.5 L127,619.5 L104.6,634 Z" fill="#9a9aa0"/><path d="M51.5,624.6 L57,622.3 L112.5,628.6 L104.4,632.6 Z" fill="#d8d8dc"/><path d="M57.5,622 L61,620.6 L115,626.8 L112,628.4 Z" fill="#18181a"/><path d="M62,619.4 L76,614.6 L98,617 L86,622.2 Z" fill="#1c2022"/><path d="M70,617.6 L76,615.6 L90,617.2 L84,619.4 Z" fill="#4a8a80" fill-opacity="0.55"/><path d="M99,617.2 L106,615.9 L124,619.2 L116,623.6 Z" fill="#4e4e54"/><path d="M104,617.8 L120,620 M102,619.6 L118,622" stroke="#c8c8cc" stroke-width="0.9" stroke-dasharray="1.6 1.2"/></g><g transform="translate(0,133.75)"><path d="M50,684 L74,678 L120,688 L94,704 Z" fill="#000" fill-opacity="0.12"/><path d="M65.3,632 L102.9,696 M103.8,640 L63.6,680.3" stroke="#0e0e10" stroke-width="2" stroke-linecap="round"/><path d="M89,700.4 L118.6,690 M50,684 L71,679" stroke="#0e0e10" stroke-width="1.7" stroke-linecap="round"/><path d="M104.6,634 L127,619.5 L127,625.5 L104.6,640 Z" fill="#3a3a3e"/><path d="M49.6,624.5 L104.6,634 L104.6,640 L50,630.5 Z" fill="#5a2e1c"/><path d="M49.6,624.5 L75.5,613.5 L127,619.5 L104.6,634 Z" fill="#9a9aa0"/><path d="M51.5,624.6 L57,622.3 L112.5,628.6 L104.4,632.6 Z" fill="#d8d8dc"/><path d="M57.5,622 L61,620.6 L115,626.8 L112,628.4 Z" fill="#18181a"/><path d="M62,619.4 L76,614.6 L98,617 L86,622.2 Z" fill="#1c2022"/><path d="M70,617.6 L76,615.6 L90,617.2 L84,619.4 Z" fill="#4a8a80" fill-opacity="0.55"/><path d="M99,617.2 L106,615.9 L124,619.2 L116,623.6 Z" fill="#4e4e54"/><path d="M104,617.8 L120,620 M102,619.6 L118,622" stroke="#c8c8cc" stroke-width="0.9" stroke-dasharray="1.6 1.2"/></g><g transform="translate(0,0.00)"><path d="M36,954 L39.8,887.2 L128.8,887.2 L132.6,954 Z" fill="#e8e8ea"/><path d="M36,954 L132.6,954 L132.6,966 L36,966 Z" fill="#8e8e92"/><path d="M36,954 L132.6,954 L132.6,956 L36,956 Z" fill="#b8b8bc"/><rect x="52.2" y="894.7" width="34.7" height="17" rx="1" fill="#3a3a3c"/><rect x="54" y="896.2" width="31" height="14" fill="#0c0c10"/><rect x="59.4" y="899.6" width="20.8" height="8.3" fill="#2a9ef0"/><rect x="90.0" y="889" width="6" height="5.3" fill="#b4b4b8"/><rect x="98.4" y="889" width="6" height="5.3" fill="#b4b4b8"/><rect x="106.8" y="889" width="6" height="5.3" fill="#b4b4b8"/><rect x="115.2" y="889" width="6" height="5.3" fill="#b4b4b8"/><rect x="89.5" y="898.5" width="3.6" height="2.6" fill="#5a6e8a"/><rect x="94.3" y="898.5" width="3.6" height="2.6" fill="#5a7a6a"/><rect x="99.1" y="898.5" width="3.6" height="2.6" fill="#5a6e8a"/><rect x="89.5" y="902.1" width="3.6" height="2.6" fill="#5a6e8a"/><rect x="94.3" y="902.1" width="3.6" height="2.6" fill="#5a7a6a"/><rect x="99.1" y="902.1" width="3.6" height="2.6" fill="#5a6e8a"/><rect x="89.5" y="905.7" width="3.6" height="2.6" fill="#5a6e8a"/><rect x="94.3" y="905.7" width="3.6" height="2.6" fill="#5a7a6a"/><rect x="99.1" y="905.7" width="3.6" height="2.6" fill="#5a6e8a"/><rect x="89.5" y="909.3" width="3.6" height="2.6" fill="#5a6e8a"/><rect x="94.3" y="909.3" width="3.6" height="2.6" fill="#5a7a6a"/><rect x="99.1" y="909.3" width="3.6" height="2.6" fill="#5a6e8a"/><circle cx="110.0" cy="900.0" r="1.5" fill="#c4c4c8"/><circle cx="115.0" cy="900.0" r="1.5" fill="#c4c4c8"/><circle cx="120.0" cy="900.0" r="1.5" fill="#c4c4c8"/><circle cx="110.0" cy="903.9" r="1.5" fill="#c4c4c8"/><circle cx="115.0" cy="903.9" r="1.5" fill="#c4c4c8"/><circle cx="120.0" cy="903.9" r="1.5" fill="#c4c4c8"/><circle cx="110.0" cy="907.8" r="1.5" fill="#c4c4c8"/><circle cx="115.0" cy="907.8" r="1.5" fill="#c4c4c8"/><circle cx="120.0" cy="907.8" r="1.5" fill="#c4c4c8"/><circle cx="110.0" cy="911.7" r="1.5" fill="#c4c4c8"/><circle cx="115.0" cy="911.7" r="1.5" fill="#c4c4c8"/><circle cx="120.0" cy="911.7" r="1.5" fill="#c4c4c8"/><circle cx="110.0" cy="915.6" r="1.5" fill="#c4c4c8"/><circle cx="115.0" cy="915.6" r="1.5" fill="#c4c4c8"/><circle cx="120.0" cy="915.6" r="1.5" fill="#c4c4c8"/><rect x="57.0" y="912.5" width="4.6" height="2.4" rx="1" fill="#c0c0c4"/><rect x="64.0" y="912.5" width="4.6" height="2.4" rx="1" fill="#c0c0c4"/><rect x="71.0" y="912.5" width="4.6" height="2.4" rx="1" fill="#c0c0c4"/><rect x="78.0" y="912.5" width="4.6" height="2.4" rx="1" fill="#c0c0c4"/><rect x="54.5" y="918.8" width="29.4" height="32.5" fill="#5a5a5e"/><rect x="55.5" y="919.8" width="6.2" height="6.9" fill="#9a9a9e"/><rect x="62.7" y="919.8" width="6.2" height="6.9" fill="#9a9a9e"/><rect x="69.9" y="919.8" width="6.2" height="6.9" fill="#9a9a9e"/><rect x="77.1" y="919.8" width="6.2" height="6.9" fill="#9a9a9e"/><rect x="55.5" y="927.7" width="6.2" height="6.9" fill="#9a9a9e"/><rect x="62.7" y="927.7" width="6.2" height="6.9" fill="#9a9a9e"/><rect x="69.9" y="927.7" width="6.2" height="6.9" fill="#9a9a9e"/><rect x="77.1" y="927.7" width="6.2" height="6.9" fill="#9a9a9e"/><rect x="55.5" y="935.6" width="6.2" height="6.9" fill="#9a9a9e"/><rect x="62.7" y="935.6" width="6.2" height="6.9" fill="#9a9a9e"/><rect x="69.9" y="935.6" width="6.2" height="6.9" fill="#9a9a9e"/><rect x="77.1" y="935.6" width="6.2" height="6.9" fill="#9a9a9e"/><rect x="55.5" y="943.5" width="6.2" height="6.9" fill="#9a9a9e"/><rect x="62.7" y="943.5" width="6.2" height="6.9" fill="#9a9a9e"/><rect x="69.9" y="943.5" width="6.2" height="6.9" fill="#9a9a9e"/><rect x="77.1" y="943.5" width="6.2" height="6.9" fill="#9a9a9e"/><circle cx="96.4" cy="923.7" r="4.4" fill="#f2f2f4" stroke="#8a8a8e" stroke-width="0.9"/><circle cx="116" cy="920.5" r="1.5" fill="#c4c4c8"/><circle cx="112.5" cy="924.5" r="1.5" fill="#c4c4c8"/><circle cx="119.5" cy="924.5" r="1.5" fill="#c4c4c8"/><circle cx="116" cy="928" r="1.5" fill="#c4c4c8"/><rect x="92.0" y="932.8" width="4.2" height="3.6" fill="#f4f4f6" stroke="#a0a0a4" stroke-width="0.5"/><rect x="98.6" y="932.8" width="4.2" height="3.6" fill="#f4f4f6" stroke="#a0a0a4" stroke-width="0.5"/><rect x="105.2" y="932.8" width="4.2" height="3.6" fill="#f4f4f6" stroke="#a0a0a4" stroke-width="0.5"/><rect x="111.8" y="932.8" width="4.2" height="3.6" fill="#f4f4f6" stroke="#a0a0a4" stroke-width="0.5"/><rect x="118.4" y="932.8" width="4.2" height="3.6" fill="#f4f4f6" stroke="#a0a0a4" stroke-width="0.5"/><rect x="88.4" y="938" width="38.5" height="13.3" fill="#6a6a6e"/><rect x="91.5" y="940" width="4.8" height="3.6" fill="#f2f2f4"/><rect x="91.5" y="946" width="4.8" height="3.6" fill="#b0183a"/><rect x="98.3" y="940" width="4.8" height="3.6" fill="#f2f2f4"/><rect x="98.3" y="946" width="4.8" height="3.6" fill="#b0183a"/><rect x="105.1" y="940" width="4.8" height="3.6" fill="#f2f2f4"/><rect x="105.1" y="946" width="4.8" height="3.6" fill="#f2f2f4"/><rect x="111.9" y="940" width="4.8" height="3.6" fill="#f2f2f4"/><rect x="111.9" y="946" width="4.8" height="3.6" fill="#f2f2f4"/><rect x="118.7" y="940" width="4.8" height="3.6" fill="#f2f2f4"/><rect x="118.7" y="946" width="4.8" height="3.6" fill="#f2f2f4"/><rect x="46" y="921" width="4" height="2.6" rx="1" fill="#f4f4f6" stroke="#8a8a8e" stroke-width="0.5"/><rect x="46" y="926" width="4" height="2.6" rx="1" fill="#f4f4f6" stroke="#8a8a8e" stroke-width="0.5"/><rect x="46" y="931" width="4" height="2.6" rx="1" fill="#f4f4f6" stroke="#8a8a8e" stroke-width="0.5"/><rect x="46" y="936" width="4" height="2.6" rx="1" fill="#f4f4f6" stroke="#8a8a8e" stroke-width="0.5"/><circle cx="47.8" cy="897" r="1.5" fill="#2a4a3a"/><circle cx="47.8" cy="902.5" r="1.5" fill="#6a1a2a"/><circle cx="47.8" cy="908" r="1.5" fill="#3a3a3e"/></g><g transform="translate(0,0.00)"><path d="M49,1087 L71.7,1081 L118.8,1090.8 L89,1103 Z" fill="#000" fill-opacity="0.12"/><path d="M68.2,1036.7 L103.1,1097.8 M101.4,1041.9 L64.7,1080.3" stroke="#0e0e10" stroke-width="2.1" stroke-linecap="round"/><path d="M89.1,1103 L118.8,1090.8 M49,1087 L71.7,1081" stroke="#0e0e10" stroke-width="1.8" stroke-linecap="round"/><path d="M100.5,1036.5 L112,1027.5 L112,1030.5 L100.5,1040.5 Z" fill="#2a2a2e"/><path d="M48.1,1027.2 L70,1022.3 L112,1027.5 L100.5,1037 Z" fill="#8a8a8e"/><path d="M54,1027.4 L70.5,1024 L106,1028.2 L98.5,1033.5 Z" fill="#1e1e22"/><path d="M48.1,1027.2 L100.5,1037 L100.5,1040.6 L48.6,1030.6 Z" fill="#d8d8dc"/><circle cx="76" cy="1009" r="1.4" fill="#222"/></g><g transform="translate(0,133.75)"><path d="M49,1087 L71.7,1081 L118.8,1090.8 L89,1103 Z" fill="#000" fill-opacity="0.12"/><path d="M68.2,1036.7 L103.1,1097.8 M101.4,1041.9 L64.7,1080.3" stroke="#0e0e10" stroke-width="2.1" stroke-linecap="round"/><path d="M89.1,1103 L118.8,1090.8 M49,1087 L71.7,1081" stroke="#0e0e10" stroke-width="1.8" stroke-linecap="round"/><path d="M100.5,1036.5 L112,1027.5 L112,1030.5 L100.5,1040.5 Z" fill="#2a2a2e"/><path d="M48.1,1027.2 L70,1022.3 L112,1027.5 L100.5,1037 Z" fill="#8a8a8e"/><path d="M54,1027.4 L70.5,1024 L106,1028.2 L98.5,1033.5 Z" fill="#1e1e22"/><path d="M48.1,1027.2 L100.5,1037 L100.5,1040.6 L48.6,1030.6 Z" fill="#d8d8dc"/><circle cx="76" cy="1009" r="1.4" fill="#222"/></g></svg></body></html>
